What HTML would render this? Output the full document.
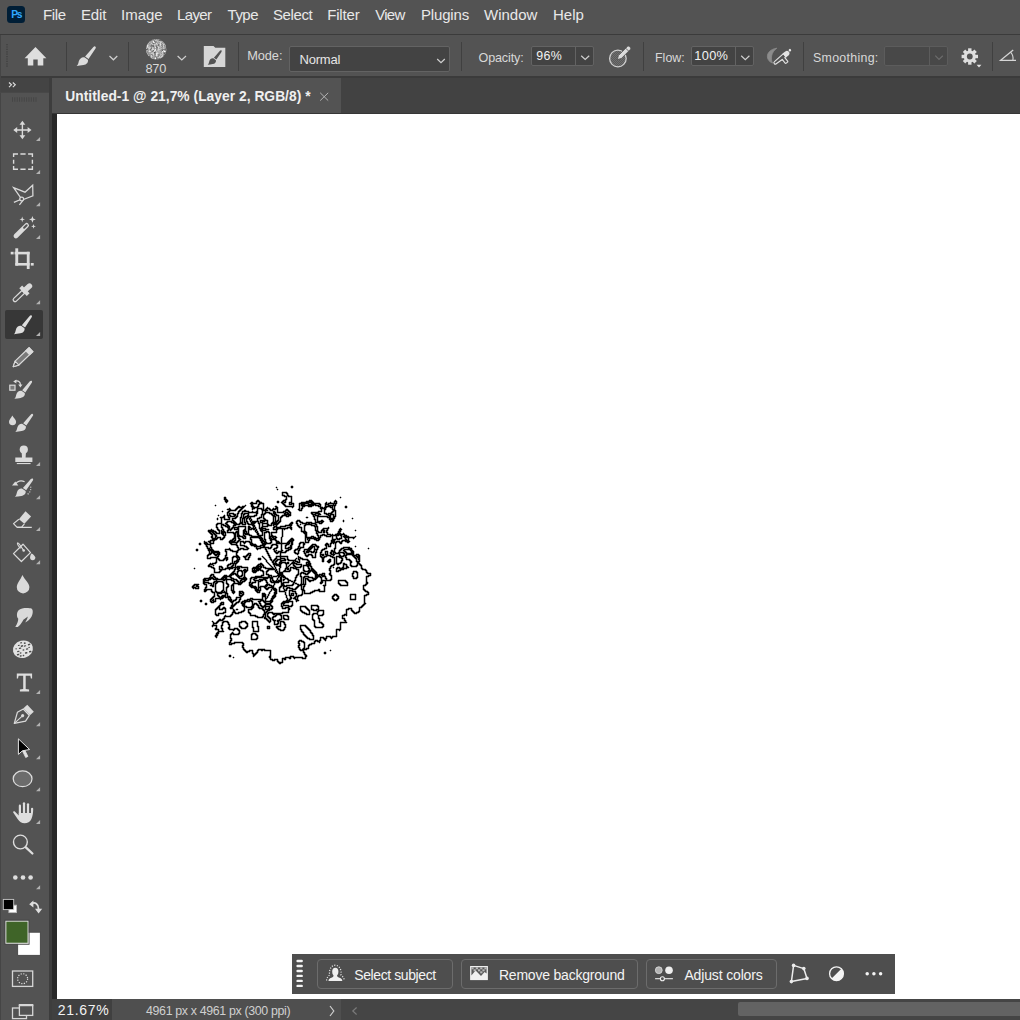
<!DOCTYPE html>
<html lang="en">
<head>
<meta charset="utf-8">
<title>Untitled-1 @ 21,7% (Layer 2, RGB/8) *</title>
<style>
html,body{margin:0;padding:0;}
body{width:1020px;height:1020px;overflow:hidden;background:#535353;position:relative;
 font-family:"Liberation Sans",sans-serif;color:#dedede;}
.abs{position:absolute;}
.t{position:absolute;white-space:nowrap;line-height:1;}
#menubar{left:0;top:0;width:1020px;height:34px;background:#535353;}
#menubar .t{font-size:15px;top:7px;color:#e8e8e8;}
#line1{left:0;top:34px;width:1020px;height:1px;background:#3b3b3b;}
#optbar{left:0;top:35px;width:1020px;height:41px;background:#535353;}
#line2{left:0;top:76px;width:1020px;height:2px;background:#3b3b3b;}
#tabrow{left:52px;top:78px;width:968px;height:36px;background:#424242;}
#tab{left:52px;top:78px;width:289px;height:36px;background:#535353;}
#tab .t{font-size:13px;font-weight:bold;color:#f0f0f0;letter-spacing:0.4px;}
#tools{left:0;top:78px;width:49px;height:942px;background:#535353;}
#toolgap{left:49px;top:78px;width:3px;height:942px;background:#3d3d3d;}
#toolhead{left:0;top:78px;width:49px;height:14px;background:#444444;}
#toolsel{left:5px;top:310px;width:38px;height:29px;background:#373737;border-radius:2px;}
#paste{left:52px;top:114px;width:5px;height:885px;background:#282828;}
#canvas{left:57px;top:114px;width:963px;height:885px;background:#ffffff;}
#status{left:52px;top:999px;width:968px;height:21px;background:#4f4f4f;}
#zoomfld{left:52px;top:999px;width:60px;height:21px;background:#404040;}
#hscroll{left:341px;top:999px;width:679px;height:21px;background:#454545;}
#hthumb{left:738px;top:1002px;width:290px;height:14px;background:#636363;border-radius:2px;}
.sep{position:absolute;width:1px;background:#404040;top:42px;height:29px;}
.ol{font-size:12.5px;color:#d8d8d8;top:51px;}
.field{position:absolute;background:#434343;border:1px solid #636363;box-sizing:border-box;border-radius:2px;}
.fdiv{position:absolute;width:1px;background:#636363;}
#ctb{left:292px;top:954px;width:603px;height:39.5px;background:#4e4e4e;}
.cbtn{position:absolute;top:5px;height:30px;border:1px solid #6c6c6c;border-radius:4px;box-sizing:border-box;}
.cbtn .t{font-size:14.5px;top:7px;color:#f2f2f2;}
#icons{left:0;top:0;}
</style>
</head>
<body>
<div id="menubar" class="abs"></div>
<div class="abs" style="left:7.2px;top:5.9px;width:17.7px;height:17px;background:#001e36;border-radius:3.5px;"></div>
<div id="line1" class="abs"></div>
<div id="optbar" class="abs"></div>
<div class="sep" style="left:66px"></div>
<div class="sep" style="left:128px"></div>
<div class="sep" style="left:238px"></div>
<div class="sep" style="left:461px"></div>
<div class="sep" style="left:643px"></div>
<div class="sep" style="left:803px"></div>
<div class="sep" style="left:992px"></div>
<div class="field" style="left:289px;top:46px;width:161px;height:26px"></div>
<div class="field" style="left:531px;top:46px;width:63px;height:20px"><div class="fdiv" style="left:43px;top:0;height:18px"></div></div>
<div class="field" style="left:691px;top:46px;width:63px;height:20px"><div class="fdiv" style="left:43px;top:0;height:18px"></div></div>
<div class="field" style="left:884px;top:46px;width:64px;height:20px;background:#484848;border-color:#5c5c5c"><div class="fdiv" style="left:44px;top:0;height:18px;background:#5c5c5c"></div></div>
<div id="line2" class="abs"></div>
<div id="tabrow" class="abs"></div>
<div id="tab" class="abs"></div>
<div class="abs" style="left:52px;top:113px;width:968px;height:1px;background:#363636"></div>
<div id="tools" class="abs"></div>
<div id="toolhead" class="abs"></div>
<div id="toolgap" class="abs"></div>
<div id="toolsel" class="abs"></div>
<div class="abs" style="left:0;top:35px;width:1px;height:985px;background:#454545"></div>
<div class="abs" style="left:0;top:92px;width:49px;height:1px;background:#484848"></div>
<div id="paste" class="abs"></div>
<div id="canvas" class="abs"></div>
<div id="status" class="abs"></div>
<div id="zoomfld" class="abs"></div>
<div id="hscroll" class="abs"></div>
<div id="hthumb" class="abs"></div>
<div id="ctb" class="abs">
 <div class="cbtn" style="left:25px;width:136px"></div>
 <div class="cbtn" style="left:169px;width:177px"></div>
 <div class="cbtn" style="left:354px;width:130.5px"></div>
</div>
<svg class="abs" style="left:0;top:0" width="1020" height="1020" viewBox="0 0 1020 1020"><path fill="#000" stroke="#000" stroke-width="0.5" d="M291 486h2v1h-2zM276 487h1v1h-1zM291 487h2v1h-2zM277 489h1v1h-1zM282 492h5v1h-5zM282 493h1v1h-1zM286 493h2v1h-2zM282 494h1v1h-1zM287 494h1v1h-1zM282 495h3v1h-3zM287 495h2v1h-2zM284 496h3v1h-3zM288 496h4v1h-4zM224 497h2v1h-2zM286 497h1v1h-1zM291 497h1v1h-1zM340 497h1v1h-1zM224 498h2v1h-2zM286 498h1v1h-1zM291 498h1v1h-1zM224 499h3v1h-3zM285 499h2v1h-2zM291 499h1v1h-1zM225 500h3v1h-3zM257 500h2v1h-2zM283 500h3v1h-3zM291 500h1v1h-1zM309 500h3v1h-3zM335 500h1v1h-1zM225 501h3v1h-3zM256 501h4v1h-4zM277 501h2v1h-2zM282 501h2v1h-2zM285 501h1v1h-1zM291 501h1v1h-1zM306 501h7v1h-7zM334 501h3v1h-3zM226 502h1v1h-1zM251 502h2v1h-2zM256 502h1v1h-1zM259 502h3v1h-3zM277 502h2v1h-2zM281 502h2v1h-2zM284 502h2v1h-2zM289 502h3v1h-3zM301 502h13v1h-13zM326 502h1v1h-1zM330 502h1v1h-1zM334 502h1v1h-1zM336 502h1v1h-1zM250 503h7v1h-7zM259 503h5v1h-5zM282 503h2v1h-2zM289 503h1v1h-1zM291 503h3v1h-3zM299 503h10v1h-10zM311 503h9v1h-9zM325 503h2v1h-2zM328 503h9v1h-9zM251 504h2v1h-2zM258 504h2v1h-2zM263 504h1v1h-1zM283 504h2v1h-2zM289 504h3v1h-3zM293 504h1v1h-1zM299 504h1v1h-1zM301 504h4v1h-4zM308 504h8v1h-8zM319 504h2v1h-2zM325 504h4v1h-4zM333 504h1v1h-1zM335 504h1v1h-1zM215 505h1v1h-1zM245 505h1v1h-1zM251 505h2v1h-2zM258 505h1v1h-1zM263 505h1v1h-1zM284 505h2v1h-2zM293 505h1v1h-1zM299 505h1v1h-1zM301 505h13v1h-13zM315 505h4v1h-4zM320 505h1v1h-1zM325 505h1v1h-1zM328 505h8v1h-8zM238 506h2v1h-2zM242 506h3v1h-3zM251 506h3v1h-3zM257 506h2v1h-2zM263 506h1v1h-1zM275 506h2v1h-2zM285 506h9v1h-9zM299 506h1v1h-1zM302 506h3v1h-3zM308 506h4v1h-4zM318 506h3v1h-3zM325 506h6v1h-6zM332 506h1v1h-1zM334 506h1v1h-1zM345 506h2v1h-2zM237 507h7v1h-7zM252 507h6v1h-6zM263 507h1v1h-1zM267 507h1v1h-1zM276 507h2v1h-2zM292 507h1v1h-1zM299 507h1v1h-1zM302 507h1v1h-1zM320 507h3v1h-3zM324 507h3v1h-3zM330 507h3v1h-3zM334 507h1v1h-1zM345 507h2v1h-2zM229 508h1v1h-1zM236 508h2v1h-2zM241 508h2v1h-2zM252 508h3v1h-3zM257 508h5v1h-5zM263 508h1v1h-1zM266 508h4v1h-4zM273 508h1v1h-1zM275 508h3v1h-3zM299 508h1v1h-1zM301 508h2v1h-2zM320 508h6v1h-6zM332 508h1v1h-1zM334 508h1v1h-1zM227 509h4v1h-4zM235 509h2v1h-2zM240 509h2v1h-2zM252 509h1v1h-1zM257 509h1v1h-1zM261 509h3v1h-3zM265 509h2v1h-2zM269 509h2v1h-2zM272 509h4v1h-4zM277 509h1v1h-1zM286 509h2v1h-2zM298 509h2v1h-2zM301 509h1v1h-1zM321 509h1v1h-1zM324 509h2v1h-2zM332 509h3v1h-3zM229 510h7v1h-7zM239 510h2v1h-2zM244 510h2v1h-2zM257 510h1v1h-1zM262 510h6v1h-6zM270 510h3v1h-3zM277 510h1v1h-1zM285 510h4v1h-4zM299 510h3v1h-3zM321 510h1v1h-1zM324 510h1v1h-1zM333 510h3v1h-3zM222 511h1v1h-1zM228 511h2v1h-2zM238 511h2v1h-2zM242 511h7v1h-7zM252 511h1v1h-1zM256 511h2v1h-2zM262 511h1v1h-1zM265 511h1v1h-1zM273 511h2v1h-2zM277 511h1v1h-1zM283 511h3v1h-3zM288 511h2v1h-2zM318 511h4v1h-4zM324 511h1v1h-1zM332 511h2v1h-2zM335 511h1v1h-1zM227 512h2v1h-2zM238 512h1v1h-1zM242 512h1v1h-1zM248 512h10v1h-10zM262 512h1v1h-1zM265 512h5v1h-5zM273 512h3v1h-3zM277 512h7v1h-7zM285 512h3v1h-3zM289 512h2v1h-2zM311 512h8v1h-8zM324 512h1v1h-1zM331 512h2v1h-2zM335 512h1v1h-1zM227 513h1v1h-1zM229 513h5v1h-5zM237 513h2v1h-2zM241 513h2v1h-2zM244 513h5v1h-5zM256 513h2v1h-2zM262 513h1v1h-1zM264 513h2v1h-2zM269 513h3v1h-3zM273 513h3v1h-3zM284 513h2v1h-2zM287 513h2v1h-2zM290 513h1v1h-1zM311 513h2v1h-2zM315 513h5v1h-5zM324 513h3v1h-3zM328 513h4v1h-4zM335 513h1v1h-1zM227 514h1v1h-1zM229 514h1v1h-1zM233 514h3v1h-3zM237 514h1v1h-1zM241 514h1v1h-1zM243 514h2v1h-2zM248 514h1v1h-1zM256 514h1v1h-1zM261 514h4v1h-4zM271 514h2v1h-2zM274 514h3v1h-3zM284 514h7v1h-7zM312 514h4v1h-4zM318 514h3v1h-3zM326 514h3v1h-3zM330 514h4v1h-4zM335 514h1v1h-1zM218 515h1v1h-1zM224 515h1v1h-1zM227 515h4v1h-4zM234 515h2v1h-2zM237 515h1v1h-1zM241 515h1v1h-1zM243 515h1v1h-1zM247 515h2v1h-2zM254 515h3v1h-3zM261 515h1v1h-1zM263 515h1v1h-1zM272 515h3v1h-3zM276 515h3v1h-3zM282 515h5v1h-5zM288 515h3v1h-3zM313 515h1v1h-1zM315 515h4v1h-4zM328 515h3v1h-3zM333 515h1v1h-1zM335 515h1v1h-1zM223 516h2v1h-2zM228 516h1v1h-1zM230 516h5v1h-5zM236 516h2v1h-2zM241 516h1v1h-1zM243 516h1v1h-1zM245 516h10v1h-10zM261 516h1v1h-1zM263 516h1v1h-1zM273 516h3v1h-3zM278 516h1v1h-1zM281 516h2v1h-2zM286 516h3v1h-3zM313 516h2v1h-2zM317 516h11v1h-11zM329 516h2v1h-2zM333 516h3v1h-3zM220 517h5v1h-5zM228 517h2v1h-2zM235 517h2v1h-2zM240 517h2v1h-2zM243 517h3v1h-3zM247 517h2v1h-2zM250 517h1v1h-1zM259 517h3v1h-3zM263 517h1v1h-1zM273 517h1v1h-1zM275 517h1v1h-1zM278 517h1v1h-1zM280 517h2v1h-2zM306 517h2v1h-2zM314 517h1v1h-1zM317 517h1v1h-1zM327 517h4v1h-4zM333 517h2v1h-2zM217 518h1v1h-1zM221 518h1v1h-1zM224 518h1v1h-1zM229 518h1v1h-1zM232 518h4v1h-4zM240 518h1v1h-1zM242 518h3v1h-3zM246 518h2v1h-2zM249 518h2v1h-2zM257 518h3v1h-3zM263 518h2v1h-2zM273 518h1v1h-1zM275 518h1v1h-1zM278 518h1v1h-1zM280 518h1v1h-1zM314 518h1v1h-1zM317 518h1v1h-1zM329 518h6v1h-6zM352 518h1v1h-1zM217 519h1v1h-1zM221 519h1v1h-1zM224 519h6v1h-6zM232 519h1v1h-1zM240 519h1v1h-1zM242 519h1v1h-1zM244 519h1v1h-1zM246 519h1v1h-1zM249 519h1v1h-1zM251 519h1v1h-1zM257 519h1v1h-1zM264 519h2v1h-2zM273 519h1v1h-1zM275 519h1v1h-1zM278 519h1v1h-1zM280 519h1v1h-1zM314 519h2v1h-2zM317 519h1v1h-1zM329 519h5v1h-5zM221 520h1v1h-1zM232 520h2v1h-2zM240 520h1v1h-1zM242 520h1v1h-1zM244 520h1v1h-1zM246 520h1v1h-1zM250 520h2v1h-2zM257 520h1v1h-1zM260 520h8v1h-8zM273 520h1v1h-1zM275 520h1v1h-1zM277 520h2v1h-2zM280 520h1v1h-1zM297 520h3v1h-3zM315 520h1v1h-1zM317 520h1v1h-1zM321 520h2v1h-2zM330 520h1v1h-1zM332 520h2v1h-2zM343 520h1v1h-1zM221 521h1v1h-1zM227 521h5v1h-5zM233 521h2v1h-2zM240 521h1v1h-1zM242 521h1v1h-1zM244 521h1v1h-1zM246 521h2v1h-2zM250 521h1v1h-1zM252 521h7v1h-7zM260 521h1v1h-1zM262 521h3v1h-3zM267 521h1v1h-1zM273 521h1v1h-1zM275 521h3v1h-3zM279 521h2v1h-2zM296 521h2v1h-2zM299 521h2v1h-2zM315 521h1v1h-1zM317 521h7v1h-7zM330 521h3v1h-3zM343 521h1v1h-1zM221 522h1v1h-1zM226 522h2v1h-2zM231 522h5v1h-5zM240 522h3v1h-3zM244 522h2v1h-2zM247 522h1v1h-1zM251 522h5v1h-5zM258 522h1v1h-1zM260 522h3v1h-3zM267 522h1v1h-1zM272 522h5v1h-5zM278 522h2v1h-2zM291 522h2v1h-2zM296 522h1v1h-1zM300 522h3v1h-3zM306 522h6v1h-6zM315 522h5v1h-5zM321 522h2v1h-2zM217 523h5v1h-5zM225 523h2v1h-2zM233 523h4v1h-4zM239 523h4v1h-4zM245 523h1v1h-1zM247 523h2v1h-2zM251 523h4v1h-4zM258 523h2v1h-2zM262 523h6v1h-6zM271 523h8v1h-8zM290 523h3v1h-3zM296 523h2v1h-2zM302 523h5v1h-5zM308 523h2v1h-2zM311 523h5v1h-5zM319 523h3v1h-3zM216 524h2v1h-2zM221 524h3v1h-3zM226 524h2v1h-2zM234 524h6v1h-6zM242 524h4v1h-4zM248 524h6v1h-6zM259 524h1v1h-1zM262 524h1v1h-1zM267 524h2v1h-2zM271 524h1v1h-1zM273 524h5v1h-5zM289 524h3v1h-3zM297 524h1v1h-1zM300 524h1v1h-1zM305 524h7v1h-7zM315 524h2v1h-2zM216 525h1v1h-1zM221 525h1v1h-1zM223 525h3v1h-3zM227 525h2v1h-2zM233 525h3v1h-3zM252 525h3v1h-3zM259 525h1v1h-1zM262 525h1v1h-1zM267 525h5v1h-5zM273 525h1v1h-1zM276 525h1v1h-1zM285 525h7v1h-7zM297 525h2v1h-2zM304 525h2v1h-2zM311 525h4v1h-4zM316 525h1v1h-1zM216 526h1v1h-1zM221 526h1v1h-1zM225 526h5v1h-5zM233 526h1v1h-1zM238 526h8v1h-8zM248 526h2v1h-2zM253 526h2v1h-2zM259 526h1v1h-1zM262 526h6v1h-6zM274 526h3v1h-3zM280 526h6v1h-6zM290 526h1v1h-1zM298 526h2v1h-2zM304 526h1v1h-1zM314 526h4v1h-4zM216 527h2v1h-2zM221 527h2v1h-2zM227 527h3v1h-3zM232 527h7v1h-7zM245 527h1v1h-1zM248 527h3v1h-3zM253 527h1v1h-1zM255 527h1v1h-1zM259 527h1v1h-1zM261 527h2v1h-2zM273 527h2v1h-2zM276 527h5v1h-5zM287 527h5v1h-5zM299 527h3v1h-3zM304 527h1v1h-1zM315 527h1v1h-1zM317 527h1v1h-1zM328 527h1v1h-1zM217 528h1v1h-1zM222 528h1v1h-1zM228 528h2v1h-2zM231 528h2v1h-2zM234 528h1v1h-1zM237 528h2v1h-2zM245 528h1v1h-1zM248 528h2v1h-2zM251 528h5v1h-5zM259 528h7v1h-7zM273 528h1v1h-1zM276 528h12v1h-12zM290 528h2v1h-2zM301 528h1v1h-1zM304 528h1v1h-1zM315 528h1v1h-1zM317 528h1v1h-1zM323 528h6v1h-6zM340 528h1v1h-1zM211 529h1v1h-1zM217 529h2v1h-2zM222 529h2v1h-2zM228 529h4v1h-4zM234 529h5v1h-5zM244 529h2v1h-2zM248 529h4v1h-4zM253 529h2v1h-2zM256 529h1v1h-1zM260 529h3v1h-3zM265 529h4v1h-4zM273 529h5v1h-5zM282 529h1v1h-1zM284 529h1v1h-1zM291 529h1v1h-1zM301 529h1v1h-1zM304 529h1v1h-1zM315 529h1v1h-1zM317 529h1v1h-1zM322 529h2v1h-2zM327 529h1v1h-1zM339 529h3v1h-3zM208 530h6v1h-6zM218 530h2v1h-2zM221 530h1v1h-1zM223 530h1v1h-1zM227 530h2v1h-2zM230 530h1v1h-1zM238 530h1v1h-1zM243 530h3v1h-3zM248 530h1v1h-1zM255 530h2v1h-2zM260 530h6v1h-6zM276 530h1v1h-1zM282 530h1v1h-1zM301 530h1v1h-1zM304 530h1v1h-1zM315 530h3v1h-3zM321 530h4v1h-4zM326 530h2v1h-2zM339 530h2v1h-2zM355 530h1v1h-1zM208 531h8v1h-8zM219 531h1v1h-1zM221 531h4v1h-4zM227 531h1v1h-1zM236 531h3v1h-3zM243 531h4v1h-4zM248 531h1v1h-1zM255 531h1v1h-1zM257 531h1v1h-1zM261 531h2v1h-2zM266 531h3v1h-3zM276 531h1v1h-1zM282 531h1v1h-1zM301 531h5v1h-5zM316 531h3v1h-3zM321 531h1v1h-1zM323 531h2v1h-2zM326 531h1v1h-1zM338 531h3v1h-3zM209 532h2v1h-2zM212 532h2v1h-2zM215 532h2v1h-2zM219 532h1v1h-1zM221 532h5v1h-5zM227 532h7v1h-7zM235 532h4v1h-4zM243 532h2v1h-2zM246 532h1v1h-1zM248 532h1v1h-1zM256 532h2v1h-2zM262 532h1v1h-1zM264 532h3v1h-3zM268 532h2v1h-2zM271 532h6v1h-6zM282 532h1v1h-1zM303 532h4v1h-4zM316 532h1v1h-1zM318 532h4v1h-4zM323 532h2v1h-2zM326 532h2v1h-2zM338 532h2v1h-2zM210 533h2v1h-2zM213 533h2v1h-2zM216 533h4v1h-4zM221 533h3v1h-3zM225 533h1v1h-1zM233 533h3v1h-3zM237 533h2v1h-2zM243 533h6v1h-6zM257 533h2v1h-2zM262 533h1v1h-1zM264 533h1v1h-1zM269 533h1v1h-1zM271 533h1v1h-1zM282 533h1v1h-1zM304 533h3v1h-3zM316 533h2v1h-2zM327 533h1v1h-1zM337 533h4v1h-4zM343 533h1v1h-1zM211 534h2v1h-2zM214 534h2v1h-2zM222 534h2v1h-2zM225 534h1v1h-1zM234 534h2v1h-2zM237 534h2v1h-2zM243 534h1v1h-1zM245 534h5v1h-5zM257 534h2v1h-2zM262 534h1v1h-1zM264 534h1v1h-1zM269 534h1v1h-1zM271 534h1v1h-1zM282 534h1v1h-1zM305 534h2v1h-2zM317 534h1v1h-1zM322 534h3v1h-3zM327 534h4v1h-4zM332 534h1v1h-1zM335 534h10v1h-10zM212 535h1v1h-1zM215 535h2v1h-2zM223 535h3v1h-3zM234 535h2v1h-2zM237 535h3v1h-3zM243 535h2v1h-2zM249 535h3v1h-3zM258 535h5v1h-5zM264 535h1v1h-1zM269 535h1v1h-1zM271 535h2v1h-2zM282 535h1v1h-1zM305 535h2v1h-2zM317 535h2v1h-2zM320 535h3v1h-3zM324 535h3v1h-3zM330 535h9v1h-9zM340 535h2v1h-2zM344 535h3v1h-3zM211 536h2v1h-2zM215 536h2v1h-2zM224 536h1v1h-1zM234 536h2v1h-2zM237 536h6v1h-6zM244 536h2v1h-2zM251 536h10v1h-10zM264 536h1v1h-1zM269 536h7v1h-7zM282 536h1v1h-1zM305 536h2v1h-2zM311 536h3v1h-3zM318 536h1v1h-1zM320 536h1v1h-1zM326 536h5v1h-5zM332 536h1v1h-1zM336 536h1v1h-1zM341 536h1v1h-1zM343 536h6v1h-6zM355 536h1v1h-1zM211 537h2v1h-2zM215 537h1v1h-1zM217 537h4v1h-4zM223 537h2v1h-2zM234 537h2v1h-2zM238 537h1v1h-1zM242 537h2v1h-2zM245 537h1v1h-1zM250 537h12v1h-12zM264 537h1v1h-1zM269 537h2v1h-2zM272 537h2v1h-2zM275 537h2v1h-2zM281 537h1v1h-1zM305 537h7v1h-7zM313 537h3v1h-3zM318 537h3v1h-3zM332 537h1v1h-1zM336 537h1v1h-1zM341 537h1v1h-1zM344 537h11v1h-11zM212 538h6v1h-6zM220 538h1v1h-1zM222 538h2v1h-2zM233 538h3v1h-3zM238 538h2v1h-2zM243 538h3v1h-3zM250 538h1v1h-1zM259 538h4v1h-4zM264 538h1v1h-1zM269 538h3v1h-3zM273 538h3v1h-3zM281 538h1v1h-1zM291 538h2v1h-2zM305 538h1v1h-1zM307 538h13v1h-13zM332 538h1v1h-1zM336 538h2v1h-2zM339 538h3v1h-3zM345 538h1v1h-1zM348 538h1v1h-1zM353 538h1v1h-1zM212 539h5v1h-5zM220 539h3v1h-3zM232 539h2v1h-2zM235 539h1v1h-1zM239 539h2v1h-2zM250 539h2v1h-2zM260 539h3v1h-3zM264 539h2v1h-2zM270 539h6v1h-6zM281 539h1v1h-1zM290 539h4v1h-4zM305 539h1v1h-1zM307 539h1v1h-1zM309 539h1v1h-1zM314 539h3v1h-3zM318 539h2v1h-2zM332 539h4v1h-4zM337 539h3v1h-3zM345 539h2v1h-2zM348 539h1v1h-1zM210 540h5v1h-5zM230 540h3v1h-3zM234 540h2v1h-2zM238 540h2v1h-2zM251 540h1v1h-1zM260 540h4v1h-4zM265 540h1v1h-1zM270 540h2v1h-2zM275 540h2v1h-2zM281 540h1v1h-1zM289 540h5v1h-5zM305 540h1v1h-1zM308 540h2v1h-2zM316 540h3v1h-3zM331 540h4v1h-4zM342 540h7v1h-7zM204 541h1v1h-1zM208 541h3v1h-3zM213 541h1v1h-1zM229 541h6v1h-6zM237 541h2v1h-2zM240 541h4v1h-4zM245 541h5v1h-5zM251 541h1v1h-1zM261 541h5v1h-5zM271 541h1v1h-1zM276 541h3v1h-3zM281 541h1v1h-1zM288 541h5v1h-5zM305 541h1v1h-1zM308 541h1v1h-1zM331 541h4v1h-4zM336 541h4v1h-4zM341 541h2v1h-2zM345 541h5v1h-5zM204 542h3v1h-3zM209 542h2v1h-2zM213 542h1v1h-1zM229 542h9v1h-9zM240 542h1v1h-1zM243 542h3v1h-3zM249 542h3v1h-3zM261 542h2v1h-2zM264 542h3v1h-3zM270 542h2v1h-2zM276 542h4v1h-4zM281 542h1v1h-1zM287 542h3v1h-3zM291 542h2v1h-2zM300 542h4v1h-4zM305 542h4v1h-4zM331 542h6v1h-6zM339 542h3v1h-3zM347 542h2v1h-2zM199 543h2v1h-2zM204 543h4v1h-4zM210 543h4v1h-4zM230 543h2v1h-2zM236 543h1v1h-1zM240 543h1v1h-1zM244 543h1v1h-1zM250 543h3v1h-3zM262 543h9v1h-9zM276 543h14v1h-14zM291 543h2v1h-2zM299 543h2v1h-2zM303 543h2v1h-2zM326 543h2v1h-2zM330 543h2v1h-2zM333 543h1v1h-1zM335 543h1v1h-1zM340 543h2v1h-2zM199 544h2v1h-2zM205 544h6v1h-6zM231 544h6v1h-6zM240 544h1v1h-1zM250 544h6v1h-6zM262 544h4v1h-4zM272 544h5v1h-5zM281 544h1v1h-1zM286 544h3v1h-3zM291 544h2v1h-2zM299 544h1v1h-1zM303 544h2v1h-2zM312 544h4v1h-4zM325 544h4v1h-4zM330 544h1v1h-1zM335 544h1v1h-1zM206 545h1v1h-1zM210 545h1v1h-1zM236 545h2v1h-2zM240 545h5v1h-5zM251 545h6v1h-6zM260 545h5v1h-5zM271 545h2v1h-2zM276 545h2v1h-2zM281 545h1v1h-1zM285 545h2v1h-2zM290 545h2v1h-2zM299 545h1v1h-1zM303 545h1v1h-1zM311 545h2v1h-2zM315 545h2v1h-2zM325 545h2v1h-2zM328 545h1v1h-1zM330 545h1v1h-1zM335 545h1v1h-1zM206 546h2v1h-2zM210 546h1v1h-1zM237 546h1v1h-1zM244 546h3v1h-3zM254 546h7v1h-7zM263 546h2v1h-2zM271 546h1v1h-1zM277 546h1v1h-1zM281 546h1v1h-1zM285 546h1v1h-1zM290 546h2v1h-2zM298 546h2v1h-2zM303 546h1v1h-1zM310 546h5v1h-5zM316 546h3v1h-3zM326 546h1v1h-1zM328 546h3v1h-3zM335 546h1v1h-1zM355 546h1v1h-1zM207 547h1v1h-1zM210 547h2v1h-2zM237 547h2v1h-2zM246 547h2v1h-2zM256 547h1v1h-1zM260 547h9v1h-9zM270 547h2v1h-2zM276 547h2v1h-2zM281 547h1v1h-1zM285 547h1v1h-1zM288 547h4v1h-4zM298 547h1v1h-1zM300 547h4v1h-4zM309 547h4v1h-4zM314 547h1v1h-1zM317 547h2v1h-2zM326 547h1v1h-1zM335 547h1v1h-1zM343 547h7v1h-7zM207 548h3v1h-3zM211 548h1v1h-1zM229 548h1v1h-1zM238 548h1v1h-1zM240 548h4v1h-4zM247 548h2v1h-2zM256 548h5v1h-5zM265 548h1v1h-1zM268 548h3v1h-3zM274 548h3v1h-3zM281 548h1v1h-1zM285 548h4v1h-4zM290 548h2v1h-2zM297 548h4v1h-4zM308 548h4v1h-4zM314 548h1v1h-1zM317 548h1v1h-1zM324 548h3v1h-3zM334 548h2v1h-2zM341 548h3v1h-3zM348 548h4v1h-4zM368 548h1v1h-1zM196 549h2v1h-2zM208 549h5v1h-5zM225 549h6v1h-6zM238 549h3v1h-3zM243 549h5v1h-5zM257 549h1v1h-1zM265 549h2v1h-2zM273 549h2v1h-2zM281 549h1v1h-1zM288 549h3v1h-3zM295 549h3v1h-3zM299 549h1v1h-1zM304 549h7v1h-7zM314 549h4v1h-4zM322 549h3v1h-3zM334 549h1v1h-1zM340 549h2v1h-2zM344 549h8v1h-8zM196 550h2v1h-2zM208 550h6v1h-6zM225 550h1v1h-1zM230 550h3v1h-3zM237 550h2v1h-2zM266 550h1v1h-1zM274 550h1v1h-1zM276 550h1v1h-1zM281 550h2v1h-2zM286 550h3v1h-3zM294 550h2v1h-2zM298 550h2v1h-2zM304 550h1v1h-1zM307 550h3v1h-3zM314 550h1v1h-1zM316 550h1v1h-1zM321 550h2v1h-2zM331 550h2v1h-2zM334 550h1v1h-1zM339 550h2v1h-2zM343 550h2v1h-2zM350 550h3v1h-3zM209 551h1v1h-1zM211 551h8v1h-8zM225 551h2v1h-2zM232 551h6v1h-6zM266 551h2v1h-2zM274 551h2v1h-2zM278 551h4v1h-4zM285 551h2v1h-2zM294 551h1v1h-1zM298 551h1v1h-1zM303 551h2v1h-2zM306 551h6v1h-6zM313 551h2v1h-2zM316 551h1v1h-1zM321 551h1v1h-1zM325 551h3v1h-3zM331 551h4v1h-4zM339 551h1v1h-1zM344 551h2v1h-2zM351 551h3v1h-3zM209 552h1v1h-1zM211 552h9v1h-9zM226 552h1v1h-1zM236 552h2v1h-2zM267 552h1v1h-1zM275 552h4v1h-4zM280 552h6v1h-6zM294 552h2v1h-2zM298 552h1v1h-1zM304 552h1v1h-1zM306 552h3v1h-3zM311 552h3v1h-3zM315 552h2v1h-2zM320 552h2v1h-2zM325 552h1v1h-1zM327 552h1v1h-1zM330 552h2v1h-2zM333 552h3v1h-3zM338 552h6v1h-6zM345 552h2v1h-2zM351 552h3v1h-3zM209 553h3v1h-3zM213 553h2v1h-2zM217 553h3v1h-3zM226 553h1v1h-1zM236 553h1v1h-1zM248 553h3v1h-3zM267 553h2v1h-2zM276 553h2v1h-2zM280 553h1v1h-1zM295 553h4v1h-4zM304 553h2v1h-2zM315 553h1v1h-1zM320 553h1v1h-1zM325 553h1v1h-1zM327 553h1v1h-1zM330 553h2v1h-2zM333 553h1v1h-1zM335 553h5v1h-5zM343 553h2v1h-2zM346 553h8v1h-8zM208 554h3v1h-3zM214 554h6v1h-6zM226 554h1v1h-1zM236 554h1v1h-1zM247 554h2v1h-2zM250 554h1v1h-1zM268 554h1v1h-1zM280 554h1v1h-1zM297 554h1v1h-1zM305 554h1v1h-1zM308 554h4v1h-4zM315 554h1v1h-1zM320 554h4v1h-4zM325 554h3v1h-3zM331 554h4v1h-4zM339 554h1v1h-1zM344 554h1v1h-1zM346 554h8v1h-8zM356 554h3v1h-3zM207 555h2v1h-2zM215 555h2v1h-2zM218 555h1v1h-1zM225 555h2v1h-2zM236 555h2v1h-2zM246 555h2v1h-2zM249 555h2v1h-2zM268 555h2v1h-2zM280 555h1v1h-1zM305 555h4v1h-4zM311 555h2v1h-2zM315 555h1v1h-1zM320 555h1v1h-1zM322 555h2v1h-2zM326 555h5v1h-5zM333 555h1v1h-1zM339 555h2v1h-2zM343 555h4v1h-4zM352 555h5v1h-5zM358 555h2v1h-2zM207 556h1v1h-1zM217 556h2v1h-2zM225 556h1v1h-1zM233 556h6v1h-6zM243 556h4v1h-4zM249 556h1v1h-1zM262 556h1v1h-1zM269 556h1v1h-1zM276 556h12v1h-12zM298 556h1v1h-1zM306 556h2v1h-2zM312 556h1v1h-1zM315 556h1v1h-1zM320 556h2v1h-2zM324 556h3v1h-3zM330 556h3v1h-3zM336 556h8v1h-8zM345 556h1v1h-1zM353 556h2v1h-2zM356 556h4v1h-4zM207 557h1v1h-1zM210 557h8v1h-8zM225 557h3v1h-3zM232 557h2v1h-2zM236 557h4v1h-4zM244 557h2v1h-2zM248 557h2v1h-2zM263 557h1v1h-1zM269 557h2v1h-2zM276 557h1v1h-1zM280 557h1v1h-1zM287 557h1v1h-1zM298 557h3v1h-3zM312 557h4v1h-4zM321 557h4v1h-4zM332 557h3v1h-3zM336 557h1v1h-1zM339 557h3v1h-3zM345 557h2v1h-2zM354 557h2v1h-2zM357 557h3v1h-3zM207 558h4v1h-4zM216 558h3v1h-3zM224 558h4v1h-4zM232 558h1v1h-1zM237 558h1v1h-1zM239 558h1v1h-1zM245 558h1v1h-1zM248 558h1v1h-1zM258 558h3v1h-3zM264 558h1v1h-1zM270 558h1v1h-1zM275 558h2v1h-2zM280 558h5v1h-5zM287 558h1v1h-1zM296 558h1v1h-1zM298 558h1v1h-1zM300 558h3v1h-3zM322 558h2v1h-2zM334 558h1v1h-1zM336 558h1v1h-1zM341 558h2v1h-2zM346 558h1v1h-1zM355 558h2v1h-2zM358 558h2v1h-2zM216 559h1v1h-1zM218 559h2v1h-2zM223 559h2v1h-2zM226 559h2v1h-2zM232 559h1v1h-1zM237 559h3v1h-3zM245 559h4v1h-4zM258 559h3v1h-3zM265 559h1v1h-1zM270 559h2v1h-2zM274 559h2v1h-2zM277 559h4v1h-4zM284 559h2v1h-2zM287 559h2v1h-2zM295 559h1v1h-1zM298 559h2v1h-2zM302 559h6v1h-6zM322 559h2v1h-2zM329 559h2v1h-2zM334 559h1v1h-1zM336 559h1v1h-1zM342 559h1v1h-1zM346 559h4v1h-4zM356 559h1v1h-1zM358 559h2v1h-2zM216 560h1v1h-1zM219 560h5v1h-5zM226 560h1v1h-1zM232 560h1v1h-1zM236 560h3v1h-3zM266 560h1v1h-1zM271 560h1v1h-1zM273 560h2v1h-2zM276 560h2v1h-2zM280 560h6v1h-6zM288 560h8v1h-8zM299 560h1v1h-1zM307 560h2v1h-2zM322 560h2v1h-2zM328 560h3v1h-3zM334 560h1v1h-1zM336 560h1v1h-1zM341 560h2v1h-2zM349 560h2v1h-2zM356 560h1v1h-1zM359 560h1v1h-1zM216 561h1v1h-1zM232 561h1v1h-1zM234 561h5v1h-5zM266 561h1v1h-1zM272 561h2v1h-2zM275 561h2v1h-2zM280 561h2v1h-2zM293 561h1v1h-1zM295 561h3v1h-3zM299 561h1v1h-1zM308 561h2v1h-2zM322 561h2v1h-2zM327 561h4v1h-4zM334 561h1v1h-1zM336 561h1v1h-1zM341 561h1v1h-1zM350 561h2v1h-2zM356 561h4v1h-4zM215 562h2v1h-2zM232 562h1v1h-1zM234 562h1v1h-1zM236 562h2v1h-2zM267 562h1v1h-1zM272 562h2v1h-2zM275 562h1v1h-1zM279 562h7v1h-7zM287 562h2v1h-2zM292 562h3v1h-3zM297 562h3v1h-3zM306 562h4v1h-4zM328 562h2v1h-2zM334 562h1v1h-1zM336 562h1v1h-1zM340 562h2v1h-2zM350 562h2v1h-2zM357 562h2v1h-2zM210 563h1v1h-1zM212 563h4v1h-4zM230 563h7v1h-7zM260 563h2v1h-2zM268 563h1v1h-1zM273 563h4v1h-4zM279 563h3v1h-3zM285 563h4v1h-4zM291 563h6v1h-6zM306 563h1v1h-1zM308 563h3v1h-3zM334 563h1v1h-1zM336 563h5v1h-5zM343 563h2v1h-2zM350 563h1v1h-1zM357 563h3v1h-3zM209 564h4v1h-4zM228 564h3v1h-3zM233 564h1v1h-1zM235 564h1v1h-1zM258 564h5v1h-5zM269 564h1v1h-1zM273 564h8v1h-8zM286 564h1v1h-1zM290 564h1v1h-1zM293 564h1v1h-1zM296 564h6v1h-6zM306 564h5v1h-5zM333 564h2v1h-2zM337 564h2v1h-2zM343 564h4v1h-4zM350 564h1v1h-1zM357 564h1v1h-1zM359 564h2v1h-2zM208 565h2v1h-2zM213 565h1v1h-1zM227 565h2v1h-2zM232 565h2v1h-2zM235 565h1v1h-1zM257 565h2v1h-2zM260 565h1v1h-1zM262 565h2v1h-2zM270 565h1v1h-1zM274 565h1v1h-1zM276 565h5v1h-5zM286 565h1v1h-1zM289 565h1v1h-1zM293 565h2v1h-2zM301 565h1v1h-1zM303 565h8v1h-8zM331 565h3v1h-3zM343 565h1v1h-1zM346 565h1v1h-1zM350 565h2v1h-2zM356 565h2v1h-2zM360 565h2v1h-2zM208 566h4v1h-4zM219 566h3v1h-3zM227 566h1v1h-1zM231 566h2v1h-2zM235 566h1v1h-1zM237 566h5v1h-5zM256 566h6v1h-6zM263 566h1v1h-1zM271 566h1v1h-1zM274 566h1v1h-1zM279 566h2v1h-2zM286 566h1v1h-1zM288 566h1v1h-1zM294 566h2v1h-2zM300 566h2v1h-2zM303 566h1v1h-1zM307 566h2v1h-2zM310 566h2v1h-2zM330 566h2v1h-2zM343 566h1v1h-1zM346 566h2v1h-2zM351 566h6v1h-6zM361 566h1v1h-1zM211 567h3v1h-3zM219 567h1v1h-1zM221 567h2v1h-2zM227 567h13v1h-13zM241 567h7v1h-7zM253 567h6v1h-6zM260 567h2v1h-2zM263 567h3v1h-3zM272 567h1v1h-1zM275 567h1v1h-1zM280 567h1v1h-1zM286 567h2v1h-2zM290 567h4v1h-4zM295 567h6v1h-6zM303 567h1v1h-1zM308 567h1v1h-1zM311 567h1v1h-1zM330 567h1v1h-1zM333 567h1v1h-1zM337 567h3v1h-3zM342 567h2v1h-2zM346 567h3v1h-3zM361 567h1v1h-1zM194 568h1v1h-1zM213 568h2v1h-2zM219 568h1v1h-1zM222 568h1v1h-1zM225 568h8v1h-8zM235 568h1v1h-1zM237 568h3v1h-3zM247 568h1v1h-1zM252 568h9v1h-9zM265 568h9v1h-9zM275 568h1v1h-1zM279 568h1v1h-1zM285 568h4v1h-4zM290 568h1v1h-1zM293 568h4v1h-4zM303 568h1v1h-1zM308 568h2v1h-2zM311 568h2v1h-2zM329 568h2v1h-2zM336 568h2v1h-2zM339 568h8v1h-8zM361 568h2v1h-2zM214 569h1v1h-1zM219 569h7v1h-7zM229 569h1v1h-1zM234 569h2v1h-2zM237 569h2v1h-2zM244 569h2v1h-2zM247 569h1v1h-1zM252 569h1v1h-1zM254 569h1v1h-1zM256 569h5v1h-5zM268 569h7v1h-7zM276 569h1v1h-1zM279 569h1v1h-1zM285 569h1v1h-1zM287 569h2v1h-2zM290 569h1v1h-1zM296 569h3v1h-3zM303 569h1v1h-1zM309 569h1v1h-1zM311 569h3v1h-3zM329 569h1v1h-1zM336 569h1v1h-1zM340 569h4v1h-4zM362 569h4v1h-4zM214 570h1v1h-1zM220 570h2v1h-2zM234 570h1v1h-1zM238 570h4v1h-4zM243 570h5v1h-5zM252 570h7v1h-7zM260 570h3v1h-3zM267 570h2v1h-2zM275 570h2v1h-2zM279 570h1v1h-1zM284 570h2v1h-2zM289 570h2v1h-2zM298 570h1v1h-1zM303 570h2v1h-2zM308 570h7v1h-7zM329 570h2v1h-2zM336 570h1v1h-1zM338 570h3v1h-3zM365 570h2v1h-2zM214 571h1v1h-1zM219 571h2v1h-2zM233 571h2v1h-2zM237 571h2v1h-2zM241 571h2v1h-2zM244 571h3v1h-3zM252 571h5v1h-5zM262 571h2v1h-2zM266 571h2v1h-2zM275 571h1v1h-1zM277 571h1v1h-1zM279 571h1v1h-1zM283 571h7v1h-7zM298 571h1v1h-1zM304 571h7v1h-7zM312 571h4v1h-4zM330 571h1v1h-1zM336 571h3v1h-3zM353 571h4v1h-4zM366 571h1v1h-1zM214 572h6v1h-6zM232 572h2v1h-2zM237 572h1v1h-1zM242 572h1v1h-1zM244 572h2v1h-2zM253 572h3v1h-3zM263 572h1v1h-1zM266 572h1v1h-1zM276 572h2v1h-2zM279 572h4v1h-4zM298 572h1v1h-1zM301 572h3v1h-3zM308 572h2v1h-2zM313 572h4v1h-4zM330 572h1v1h-1zM353 572h1v1h-1zM356 572h2v1h-2zM366 572h2v1h-2zM231 573h5v1h-5zM237 573h1v1h-1zM242 573h1v1h-1zM244 573h1v1h-1zM263 573h1v1h-1zM266 573h1v1h-1zM277 573h6v1h-6zM298 573h1v1h-1zM300 573h2v1h-2zM303 573h3v1h-3zM307 573h2v1h-2zM314 573h3v1h-3zM322 573h3v1h-3zM329 573h2v1h-2zM352 573h2v1h-2zM357 573h1v1h-1zM367 573h4v1h-4zM211 574h3v1h-3zM230 574h4v1h-4zM235 574h3v1h-3zM242 574h1v1h-1zM244 574h1v1h-1zM263 574h1v1h-1zM266 574h3v1h-3zM278 574h5v1h-5zM297 574h2v1h-2zM300 574h1v1h-1zM305 574h3v1h-3zM315 574h3v1h-3zM319 574h4v1h-4zM324 574h1v1h-1zM329 574h2v1h-2zM352 574h1v1h-1zM357 574h1v1h-1zM370 574h1v1h-1zM210 575h2v1h-2zM213 575h1v1h-1zM224 575h3v1h-3zM229 575h3v1h-3zM236 575h3v1h-3zM241 575h2v1h-2zM244 575h1v1h-1zM261 575h3v1h-3zM268 575h4v1h-4zM277 575h7v1h-7zM296 575h2v1h-2zM300 575h1v1h-1zM315 575h5v1h-5zM321 575h4v1h-4zM330 575h2v1h-2zM352 575h1v1h-1zM357 575h1v1h-1zM368 575h3v1h-3zM210 576h1v1h-1zM213 576h2v1h-2zM223 576h8v1h-8zM237 576h5v1h-5zM244 576h1v1h-1zM255 576h7v1h-7zM268 576h2v1h-2zM271 576h1v1h-1zM273 576h4v1h-4zM278 576h2v1h-2zM281 576h4v1h-4zM296 576h1v1h-1zM300 576h2v1h-2zM304 576h5v1h-5zM315 576h6v1h-6zM322 576h4v1h-4zM331 576h1v1h-1zM352 576h2v1h-2zM357 576h1v1h-1zM366 576h3v1h-3zM209 577h4v1h-4zM214 577h2v1h-2zM222 577h5v1h-5zM230 577h2v1h-2zM238 577h2v1h-2zM243 577h3v1h-3zM251 577h22v1h-22zM278 577h1v1h-1zM280 577h2v1h-2zM283 577h3v1h-3zM295 577h2v1h-2zM301 577h1v1h-1zM303 577h2v1h-2zM308 577h5v1h-5zM315 577h3v1h-3zM320 577h2v1h-2zM325 577h1v1h-1zM331 577h1v1h-1zM353 577h1v1h-1zM356 577h2v1h-2zM366 577h1v1h-1zM204 578h10v1h-10zM215 578h3v1h-3zM221 578h3v1h-3zM225 578h2v1h-2zM231 578h3v1h-3zM239 578h8v1h-8zM250 578h2v1h-2zM254 578h3v1h-3zM263 578h5v1h-5zM270 578h3v1h-3zM277 578h1v1h-1zM280 578h2v1h-2zM285 578h3v1h-3zM295 578h1v1h-1zM301 578h1v1h-1zM303 578h1v1h-1zM305 578h3v1h-3zM312 578h5v1h-5zM321 578h1v1h-1zM325 578h2v1h-2zM331 578h1v1h-1zM353 578h4v1h-4zM366 578h1v1h-1zM203 579h3v1h-3zM208 579h3v1h-3zM213 579h19v1h-19zM233 579h4v1h-4zM241 579h6v1h-6zM250 579h1v1h-1zM253 579h2v1h-2zM259 579h7v1h-7zM270 579h1v1h-1zM272 579h1v1h-1zM277 579h1v1h-1zM280 579h2v1h-2zM283 579h2v1h-2zM287 579h2v1h-2zM295 579h1v1h-1zM301 579h1v1h-1zM303 579h1v1h-1zM305 579h1v1h-1zM307 579h2v1h-2zM313 579h3v1h-3zM321 579h1v1h-1zM326 579h1v1h-1zM330 579h2v1h-2zM366 579h1v1h-1zM203 580h6v1h-6zM216 580h1v1h-1zM223 580h2v1h-2zM226 580h1v1h-1zM231 580h3v1h-3zM236 580h2v1h-2zM240 580h2v1h-2zM244 580h2v1h-2zM250 580h1v1h-1zM254 580h5v1h-5zM260 580h3v1h-3zM265 580h2v1h-2zM270 580h1v1h-1zM272 580h2v1h-2zM276 580h1v1h-1zM278 580h4v1h-4zM283 580h1v1h-1zM288 580h3v1h-3zM294 580h2v1h-2zM301 580h1v1h-1zM303 580h1v1h-1zM305 580h1v1h-1zM308 580h6v1h-6zM321 580h10v1h-10zM338 580h8v1h-8zM366 580h1v1h-1zM203 581h2v1h-2zM214 581h9v1h-9zM226 581h1v1h-1zM233 581h2v1h-2zM237 581h2v1h-2zM240 581h1v1h-1zM242 581h3v1h-3zM250 581h1v1h-1zM255 581h1v1h-1zM258 581h3v1h-3zM266 581h1v1h-1zM270 581h2v1h-2zM273 581h9v1h-9zM288 581h1v1h-1zM291 581h2v1h-2zM294 581h1v1h-1zM301 581h1v1h-1zM303 581h1v1h-1zM305 581h1v1h-1zM309 581h2v1h-2zM321 581h2v1h-2zM325 581h1v1h-1zM338 581h1v1h-1zM345 581h2v1h-2zM366 581h1v1h-1zM203 582h6v1h-6zM213 582h2v1h-2zM216 582h2v1h-2zM222 582h2v1h-2zM226 582h1v1h-1zM234 582h1v1h-1zM238 582h5v1h-5zM249 582h2v1h-2zM252 582h4v1h-4zM258 582h1v1h-1zM266 582h2v1h-2zM271 582h8v1h-8zM281 582h1v1h-1zM283 582h6v1h-6zM293 582h2v1h-2zM301 582h1v1h-1zM303 582h1v1h-1zM305 582h1v1h-1zM320 582h3v1h-3zM325 582h1v1h-1zM338 582h1v1h-1zM346 582h2v1h-2zM366 582h2v1h-2zM203 583h2v1h-2zM208 583h4v1h-4zM213 583h1v1h-1zM215 583h2v1h-2zM223 583h1v1h-1zM226 583h2v1h-2zM233 583h9v1h-9zM249 583h1v1h-1zM251 583h2v1h-2zM258 583h1v1h-1zM267 583h1v1h-1zM274 583h1v1h-1zM281 583h3v1h-3zM293 583h1v1h-1zM295 583h2v1h-2zM301 583h1v1h-1zM303 583h1v1h-1zM305 583h1v1h-1zM320 583h2v1h-2zM325 583h1v1h-1zM338 583h2v1h-2zM347 583h1v1h-1zM366 583h2v1h-2zM194 584h5v1h-5zM204 584h3v1h-3zM211 584h1v1h-1zM213 584h1v1h-1zM215 584h1v1h-1zM223 584h1v1h-1zM227 584h2v1h-2zM232 584h2v1h-2zM238 584h3v1h-3zM249 584h3v1h-3zM258 584h1v1h-1zM266 584h4v1h-4zM274 584h1v1h-1zM281 584h3v1h-3zM292 584h2v1h-2zM297 584h2v1h-2zM300 584h6v1h-6zM325 584h1v1h-1zM339 584h2v1h-2zM347 584h1v1h-1zM365 584h2v1h-2zM193 585h2v1h-2zM196 585h2v1h-2zM206 585h1v1h-1zM210 585h4v1h-4zM215 585h1v1h-1zM223 585h1v1h-1zM228 585h1v1h-1zM231 585h3v1h-3zM249 585h4v1h-4zM258 585h1v1h-1zM265 585h3v1h-3zM269 585h3v1h-3zM273 585h1v1h-1zM281 585h4v1h-4zM286 585h7v1h-7zM298 585h4v1h-4zM304 585h1v1h-1zM323 585h3v1h-3zM340 585h8v1h-8zM363 585h3v1h-3zM192 586h2v1h-2zM196 586h3v1h-3zM206 586h1v1h-1zM212 586h2v1h-2zM215 586h1v1h-1zM223 586h1v1h-1zM227 586h2v1h-2zM231 586h1v1h-1zM233 586h1v1h-1zM250 586h6v1h-6zM258 586h1v1h-1zM260 586h7v1h-7zM271 586h3v1h-3zM280 586h2v1h-2zM283 586h4v1h-4zM297 586h2v1h-2zM301 586h1v1h-1zM303 586h2v1h-2zM324 586h1v1h-1zM363 586h1v1h-1zM192 587h4v1h-4zM198 587h1v1h-1zM205 587h2v1h-2zM215 587h1v1h-1zM223 587h1v1h-1zM226 587h2v1h-2zM231 587h1v1h-1zM233 587h1v1h-1zM251 587h6v1h-6zM258 587h3v1h-3zM264 587h2v1h-2zM268 587h6v1h-6zM279 587h2v1h-2zM283 587h1v1h-1zM287 587h3v1h-3zM296 587h2v1h-2zM301 587h1v1h-1zM303 587h1v1h-1zM324 587h1v1h-1zM363 587h1v1h-1zM193 588h1v1h-1zM195 588h4v1h-4zM205 588h1v1h-1zM215 588h1v1h-1zM223 588h1v1h-1zM226 588h1v1h-1zM231 588h1v1h-1zM233 588h1v1h-1zM254 588h3v1h-3zM258 588h1v1h-1zM260 588h1v1h-1zM265 588h4v1h-4zM272 588h4v1h-4zM279 588h1v1h-1zM283 588h1v1h-1zM286 588h2v1h-2zM289 588h4v1h-4zM295 588h2v1h-2zM301 588h1v1h-1zM303 588h1v1h-1zM324 588h1v1h-1zM363 588h1v1h-1zM204 589h8v1h-8zM215 589h1v1h-1zM223 589h1v1h-1zM226 589h1v1h-1zM231 589h1v1h-1zM233 589h1v1h-1zM255 589h4v1h-4zM260 589h1v1h-1zM266 589h2v1h-2zM271 589h1v1h-1zM273 589h4v1h-4zM279 589h1v1h-1zM284 589h1v1h-1zM286 589h1v1h-1zM292 589h4v1h-4zM301 589h3v1h-3zM318 589h2v1h-2zM324 589h1v1h-1zM363 589h2v1h-2zM204 590h3v1h-3zM211 590h1v1h-1zM215 590h1v1h-1zM222 590h2v1h-2zM226 590h1v1h-1zM231 590h3v1h-3zM255 590h6v1h-6zM271 590h1v1h-1zM274 590h3v1h-3zM279 590h1v1h-1zM284 590h3v1h-3zM289 590h4v1h-4zM302 590h3v1h-3zM314 590h6v1h-6zM324 590h1v1h-1zM364 590h2v1h-2zM204 591h2v1h-2zM211 591h2v1h-2zM215 591h2v1h-2zM221 591h2v1h-2zM224 591h1v1h-1zM226 591h1v1h-1zM232 591h3v1h-3zM239 591h4v1h-4zM256 591h2v1h-2zM259 591h1v1h-1zM270 591h1v1h-1zM275 591h2v1h-2zM279 591h6v1h-6zM289 591h1v1h-1zM292 591h4v1h-4zM302 591h1v1h-1zM304 591h1v1h-1zM312 591h3v1h-3zM319 591h6v1h-6zM365 591h3v1h-3zM212 592h3v1h-3zM216 592h11v1h-11zM232 592h3v1h-3zM239 592h2v1h-2zM242 592h2v1h-2zM257 592h3v1h-3zM269 592h1v1h-1zM274 592h3v1h-3zM285 592h1v1h-1zM289 592h1v1h-1zM295 592h1v1h-1zM302 592h1v1h-1zM304 592h1v1h-1zM310 592h3v1h-3zM367 592h2v1h-2zM214 593h1v1h-1zM217 593h5v1h-5zM225 593h3v1h-3zM233 593h1v1h-1zM239 593h3v1h-3zM243 593h1v1h-1zM262 593h3v1h-3zM269 593h1v1h-1zM274 593h3v1h-3zM285 593h1v1h-1zM289 593h1v1h-1zM291 593h3v1h-3zM295 593h2v1h-2zM302 593h1v1h-1zM304 593h7v1h-7zM368 593h1v1h-1zM214 594h1v1h-1zM217 594h1v1h-1zM225 594h1v1h-1zM227 594h1v1h-1zM239 594h1v1h-1zM242 594h2v1h-2zM262 594h4v1h-4zM268 594h1v1h-1zM274 594h2v1h-2zM285 594h1v1h-1zM289 594h1v1h-1zM291 594h1v1h-1zM293 594h1v1h-1zM296 594h1v1h-1zM301 594h2v1h-2zM334 594h3v1h-3zM350 594h6v1h-6zM366 594h3v1h-3zM214 595h1v1h-1zM217 595h2v1h-2zM222 595h4v1h-4zM227 595h1v1h-1zM239 595h4v1h-4zM262 595h4v1h-4zM268 595h1v1h-1zM273 595h3v1h-3zM286 595h1v1h-1zM289 595h5v1h-5zM296 595h1v1h-1zM298 595h4v1h-4zM333 595h2v1h-2zM336 595h2v1h-2zM350 595h1v1h-1zM355 595h1v1h-1zM364 595h3v1h-3zM213 596h2v1h-2zM218 596h2v1h-2zM221 596h5v1h-5zM227 596h3v1h-3zM240 596h2v1h-2zM262 596h4v1h-4zM267 596h1v1h-1zM272 596h4v1h-4zM286 596h1v1h-1zM290 596h1v1h-1zM295 596h4v1h-4zM332 596h2v1h-2zM337 596h2v1h-2zM350 596h1v1h-1zM355 596h1v1h-1zM364 596h1v1h-1zM212 597h2v1h-2zM219 597h5v1h-5zM225 597h6v1h-6zM236 597h5v1h-5zM262 597h1v1h-1zM265 597h1v1h-1zM267 597h1v1h-1zM272 597h3v1h-3zM286 597h1v1h-1zM290 597h2v1h-2zM294 597h2v1h-2zM297 597h1v1h-1zM332 597h1v1h-1zM338 597h1v1h-1zM350 597h1v1h-1zM355 597h1v1h-1zM364 597h1v1h-1zM211 598h2v1h-2zM215 598h8v1h-8zM228 598h1v1h-1zM230 598h1v1h-1zM236 598h1v1h-1zM240 598h1v1h-1zM250 598h3v1h-3zM262 598h1v1h-1zM265 598h2v1h-2zM271 598h3v1h-3zM287 598h1v1h-1zM290 598h2v1h-2zM293 598h3v1h-3zM297 598h1v1h-1zM332 598h2v1h-2zM337 598h2v1h-2zM350 598h1v1h-1zM355 598h1v1h-1zM364 598h1v1h-1zM210 599h2v1h-2zM213 599h1v1h-1zM215 599h1v1h-1zM220 599h1v1h-1zM228 599h4v1h-4zM235 599h2v1h-2zM239 599h2v1h-2zM247 599h4v1h-4zM252 599h11v1h-11zM265 599h1v1h-1zM271 599h2v1h-2zM287 599h1v1h-1zM289 599h2v1h-2zM295 599h3v1h-3zM333 599h2v1h-2zM336 599h2v1h-2zM350 599h6v1h-6zM364 599h1v1h-1zM200 600h2v1h-2zM210 600h1v1h-1zM212 600h2v1h-2zM215 600h1v1h-1zM229 600h3v1h-3zM233 600h3v1h-3zM239 600h1v1h-1zM244 600h4v1h-4zM249 600h3v1h-3zM260 600h4v1h-4zM265 600h1v1h-1zM270 600h3v1h-3zM286 600h4v1h-4zM296 600h3v1h-3zM334 600h3v1h-3zM364 600h1v1h-1zM200 601h2v1h-2zM210 601h2v1h-2zM213 601h3v1h-3zM230 601h4v1h-4zM238 601h2v1h-2zM242 601h8v1h-8zM251 601h2v1h-2zM258 601h3v1h-3zM263 601h10v1h-10zM283 601h10v1h-10zM296 601h1v1h-1zM364 601h1v1h-1zM211 602h3v1h-3zM221 602h3v1h-3zM231 602h2v1h-2zM236 602h3v1h-3zM241 602h2v1h-2zM244 602h2v1h-2zM252 602h1v1h-1zM259 602h1v1h-1zM264 602h2v1h-2zM270 602h2v1h-2zM282 602h7v1h-7zM292 602h1v1h-1zM364 602h1v1h-1zM205 603h2v1h-2zM220 603h2v1h-2zM223 603h1v1h-1zM232 603h1v1h-1zM235 603h2v1h-2zM241 603h4v1h-4zM252 603h1v1h-1zM254 603h3v1h-3zM259 603h2v1h-2zM265 603h6v1h-6zM281 603h4v1h-4zM292 603h1v1h-1zM364 603h2v1h-2zM205 604h2v1h-2zM220 604h4v1h-4zM232 604h1v1h-1zM234 604h2v1h-2zM242 604h3v1h-3zM252 604h3v1h-3zM256 604h2v1h-2zM260 604h1v1h-1zM265 604h6v1h-6zM281 604h1v1h-1zM283 604h1v1h-1zM292 604h1v1h-1zM363 604h2v1h-2zM219 605h2v1h-2zM231 605h4v1h-4zM242 605h3v1h-3zM252 605h2v1h-2zM257 605h2v1h-2zM260 605h2v1h-2zM264 605h2v1h-2zM270 605h2v1h-2zM281 605h1v1h-1zM283 605h6v1h-6zM291 605h2v1h-2zM311 605h7v1h-7zM362 605h2v1h-2zM218 606h2v1h-2zM231 606h3v1h-3zM243 606h4v1h-4zM251 606h3v1h-3zM258 606h1v1h-1zM261 606h9v1h-9zM271 606h2v1h-2zM281 606h2v1h-2zM288 606h4v1h-4zM300 606h6v1h-6zM311 606h1v1h-1zM317 606h2v1h-2zM361 606h2v1h-2zM217 607h3v1h-3zM223 607h2v1h-2zM230 607h3v1h-3zM244 607h1v1h-1zM246 607h8v1h-8zM258 607h2v1h-2zM262 607h2v1h-2zM265 607h1v1h-1zM269 607h1v1h-1zM272 607h1v1h-1zM282 607h1v1h-1zM285 607h4v1h-4zM300 607h1v1h-1zM305 607h2v1h-2zM311 607h1v1h-1zM318 607h1v1h-1zM359 607h3v1h-3zM216 608h2v1h-2zM219 608h1v1h-1zM222 608h4v1h-4zM230 608h3v1h-3zM244 608h1v1h-1zM251 608h2v1h-2zM259 608h4v1h-4zM265 608h1v1h-1zM268 608h2v1h-2zM271 608h2v1h-2zM282 608h4v1h-4zM288 608h2v1h-2zM300 608h1v1h-1zM306 608h2v1h-2zM311 608h1v1h-1zM318 608h1v1h-1zM348 608h4v1h-4zM359 608h1v1h-1zM215 609h2v1h-2zM219 609h4v1h-4zM225 609h1v1h-1zM233 609h1v1h-1zM236 609h2v1h-2zM244 609h1v1h-1zM248 609h4v1h-4zM262 609h2v1h-2zM265 609h7v1h-7zM288 609h2v1h-2zM300 609h1v1h-1zM307 609h2v1h-2zM311 609h3v1h-3zM316 609h3v1h-3zM346 609h3v1h-3zM351 609h1v1h-1zM359 609h1v1h-1zM215 610h1v1h-1zM225 610h1v1h-1zM233 610h2v1h-2zM243 610h2v1h-2zM248 610h1v1h-1zM263 610h2v1h-2zM267 610h3v1h-3zM288 610h1v1h-1zM300 610h2v1h-2zM308 610h2v1h-2zM313 610h4v1h-4zM318 610h6v1h-6zM346 610h1v1h-1zM351 610h2v1h-2zM359 610h1v1h-1zM215 611h1v1h-1zM225 611h1v1h-1zM233 611h2v1h-2zM241 611h3v1h-3zM248 611h1v1h-1zM264 611h1v1h-1zM266 611h2v1h-2zM288 611h1v1h-1zM301 611h2v1h-2zM309 611h1v1h-1zM317 611h2v1h-2zM323 611h1v1h-1zM346 611h1v1h-1zM352 611h2v1h-2zM358 611h2v1h-2zM215 612h1v1h-1zM223 612h3v1h-3zM232 612h4v1h-4zM238 612h4v1h-4zM248 612h2v1h-2zM264 612h3v1h-3zM268 612h5v1h-5zM282 612h7v1h-7zM302 612h3v1h-3zM309 612h1v1h-1zM317 612h1v1h-1zM323 612h1v1h-1zM346 612h1v1h-1zM353 612h2v1h-2zM356 612h3v1h-3zM215 613h1v1h-1zM218 613h6v1h-6zM232 613h1v1h-1zM235 613h4v1h-4zM249 613h2v1h-2zM264 613h2v1h-2zM267 613h2v1h-2zM272 613h11v1h-11zM304 613h3v1h-3zM309 613h1v1h-1zM313 613h5v1h-5zM323 613h1v1h-1zM346 613h1v1h-1zM354 613h3v1h-3zM215 614h2v1h-2zM218 614h1v1h-1zM231 614h2v1h-2zM250 614h1v1h-1zM263 614h3v1h-3zM267 614h1v1h-1zM273 614h2v1h-2zM276 614h5v1h-5zM306 614h4v1h-4zM312 614h2v1h-2zM317 614h1v1h-1zM322 614h2v1h-2zM344 614h3v1h-3zM216 615h3v1h-3zM225 615h1v1h-1zM230 615h2v1h-2zM250 615h6v1h-6zM263 615h1v1h-1zM265 615h1v1h-1zM267 615h1v1h-1zM275 615h2v1h-2zM280 615h2v1h-2zM283 615h5v1h-5zM312 615h1v1h-1zM318 615h5v1h-5zM342 615h3v1h-3zM346 615h1v1h-1zM224 616h7v1h-7zM255 616h3v1h-3zM262 616h2v1h-2zM265 616h1v1h-1zM267 616h2v1h-2zM273 616h3v1h-3zM281 616h1v1h-1zM283 616h1v1h-1zM287 616h2v1h-2zM312 616h1v1h-1zM318 616h1v1h-1zM342 616h1v1h-1zM224 617h1v1h-1zM257 617h6v1h-6zM264 617h2v1h-2zM268 617h2v1h-2zM272 617h2v1h-2zM281 617h1v1h-1zM283 617h1v1h-1zM288 617h1v1h-1zM312 617h1v1h-1zM318 617h1v1h-1zM342 617h1v1h-1zM223 618h2v1h-2zM264 618h3v1h-3zM269 618h2v1h-2zM272 618h1v1h-1zM281 618h1v1h-1zM283 618h2v1h-2zM288 618h1v1h-1zM312 618h1v1h-1zM318 618h2v1h-2zM342 618h3v1h-3zM219 619h2v1h-2zM222 619h2v1h-2zM266 619h2v1h-2zM270 619h1v1h-1zM272 619h2v1h-2zM279 619h3v1h-3zM284 619h5v1h-5zM312 619h2v1h-2zM319 619h1v1h-1zM344 619h1v1h-1zM218 620h5v1h-5zM267 620h2v1h-2zM270 620h1v1h-1zM273 620h3v1h-3zM277 620h3v1h-3zM313 620h2v1h-2zM319 620h1v1h-1zM344 620h2v1h-2zM212 621h1v1h-1zM217 621h2v1h-2zM223 621h5v1h-5zM241 621h5v1h-5zM252 621h6v1h-6zM268 621h3v1h-3zM274 621h1v1h-1zM277 621h2v1h-2zM280 621h4v1h-4zM314 621h1v1h-1zM319 621h1v1h-1zM345 621h1v1h-1zM213 622h1v1h-1zM216 622h2v1h-2zM222 622h2v1h-2zM227 622h2v1h-2zM239 622h3v1h-3zM245 622h2v1h-2zM252 622h1v1h-1zM257 622h1v1h-1zM269 622h1v1h-1zM274 622h1v1h-1zM278 622h1v1h-1zM280 622h1v1h-1zM283 622h2v1h-2zM314 622h1v1h-1zM319 622h3v1h-3zM340 622h7v1h-7zM213 623h4v1h-4zM222 623h1v1h-1zM228 623h1v1h-1zM239 623h1v1h-1zM246 623h2v1h-2zM252 623h1v1h-1zM257 623h1v1h-1zM274 623h1v1h-1zM277 623h2v1h-2zM280 623h1v1h-1zM284 623h1v1h-1zM314 623h1v1h-1zM321 623h2v1h-2zM340 623h1v1h-1zM213 624h1v1h-1zM222 624h1v1h-1zM228 624h2v1h-2zM239 624h1v1h-1zM247 624h1v1h-1zM252 624h1v1h-1zM257 624h1v1h-1zM274 624h4v1h-4zM280 624h1v1h-1zM284 624h2v1h-2zM314 624h1v1h-1zM322 624h2v1h-2zM340 624h1v1h-1zM212 625h5v1h-5zM221 625h2v1h-2zM229 625h1v1h-1zM239 625h1v1h-1zM247 625h1v1h-1zM252 625h1v1h-1zM257 625h1v1h-1zM280 625h1v1h-1zM285 625h1v1h-1zM300 625h6v1h-6zM314 625h1v1h-1zM323 625h1v1h-1zM340 625h1v1h-1zM212 626h1v1h-1zM216 626h1v1h-1zM221 626h1v1h-1zM229 626h1v1h-1zM239 626h2v1h-2zM246 626h2v1h-2zM252 626h1v1h-1zM257 626h2v1h-2zM267 626h3v1h-3zM276 626h5v1h-5zM285 626h1v1h-1zM300 626h1v1h-1zM305 626h2v1h-2zM314 626h2v1h-2zM322 626h2v1h-2zM340 626h1v1h-1zM216 627h1v1h-1zM221 627h1v1h-1zM228 627h2v1h-2zM240 627h2v1h-2zM245 627h2v1h-2zM252 627h2v1h-2zM258 627h1v1h-1zM267 627h1v1h-1zM269 627h1v1h-1zM276 627h2v1h-2zM284 627h2v1h-2zM300 627h1v1h-1zM306 627h2v1h-2zM315 627h8v1h-8zM340 627h1v1h-1zM215 628h2v1h-2zM221 628h2v1h-2zM228 628h2v1h-2zM234 628h4v1h-4zM241 628h5v1h-5zM253 628h1v1h-1zM258 628h1v1h-1zM267 628h3v1h-3zM277 628h2v1h-2zM284 628h1v1h-1zM300 628h1v1h-1zM307 628h2v1h-2zM340 628h1v1h-1zM215 629h4v1h-4zM222 629h1v1h-1zM229 629h6v1h-6zM237 629h2v1h-2zM253 629h1v1h-1zM258 629h1v1h-1zM278 629h3v1h-3zM283 629h2v1h-2zM300 629h2v1h-2zM308 629h2v1h-2zM336 629h5v1h-5zM218 630h1v1h-1zM222 630h1v1h-1zM233 630h1v1h-1zM238 630h2v1h-2zM253 630h1v1h-1zM258 630h1v1h-1zM280 630h4v1h-4zM301 630h1v1h-1zM309 630h2v1h-2zM336 630h1v1h-1zM339 630h1v1h-1zM218 631h6v1h-6zM239 631h1v1h-1zM253 631h6v1h-6zM301 631h2v1h-2zM310 631h1v1h-1zM336 631h1v1h-1zM217 632h2v1h-2zM232 632h1v1h-1zM239 632h1v1h-1zM302 632h2v1h-2zM310 632h2v1h-2zM336 632h1v1h-1zM216 633h3v1h-3zM231 633h3v1h-3zM238 633h2v1h-2zM252 633h4v1h-4zM303 633h1v1h-1zM311 633h2v1h-2zM336 633h1v1h-1zM216 634h2v1h-2zM230 634h2v1h-2zM233 634h6v1h-6zM251 634h2v1h-2zM255 634h2v1h-2zM303 634h2v1h-2zM312 634h1v1h-1zM336 634h1v1h-1zM215 635h3v1h-3zM230 635h1v1h-1zM251 635h1v1h-1zM256 635h2v1h-2zM304 635h2v1h-2zM312 635h2v1h-2zM336 635h1v1h-1zM215 636h2v1h-2zM230 636h1v1h-1zM251 636h1v1h-1zM257 636h1v1h-1zM305 636h2v1h-2zM313 636h1v1h-1zM326 636h5v1h-5zM332 636h5v1h-5zM216 637h1v1h-1zM230 637h1v1h-1zM251 637h1v1h-1zM257 637h1v1h-1zM306 637h2v1h-2zM313 637h1v1h-1zM320 637h4v1h-4zM326 637h1v1h-1zM330 637h3v1h-3zM230 638h2v1h-2zM251 638h1v1h-1zM256 638h2v1h-2zM307 638h3v1h-3zM313 638h1v1h-1zM320 638h1v1h-1zM323 638h4v1h-4zM331 638h1v1h-1zM231 639h1v1h-1zM251 639h6v1h-6zM309 639h5v1h-5zM320 639h1v1h-1zM324 639h2v1h-2zM230 640h2v1h-2zM299 640h3v1h-3zM315 640h3v1h-3zM319 640h2v1h-2zM325 640h1v1h-1zM230 641h1v1h-1zM298 641h2v1h-2zM301 641h3v1h-3zM314 641h2v1h-2zM317 641h3v1h-3zM229 642h2v1h-2zM234 642h9v1h-9zM298 642h1v1h-1zM303 642h2v1h-2zM314 642h1v1h-1zM319 642h1v1h-1zM229 643h1v1h-1zM231 643h4v1h-4zM242 643h2v1h-2zM298 643h2v1h-2zM304 643h1v1h-1zM311 643h4v1h-4zM229 644h3v1h-3zM243 644h1v1h-1zM299 644h1v1h-1zM304 644h1v1h-1zM309 644h3v1h-3zM242 645h2v1h-2zM298 645h2v1h-2zM304 645h1v1h-1zM308 645h2v1h-2zM242 646h1v1h-1zM298 646h1v1h-1zM304 646h1v1h-1zM308 646h1v1h-1zM242 647h2v1h-2zM298 647h2v1h-2zM304 647h1v1h-1zM308 647h1v1h-1zM243 648h1v1h-1zM299 648h1v1h-1zM303 648h2v1h-2zM306 648h3v1h-3zM243 649h2v1h-2zM258 649h7v1h-7zM299 649h2v1h-2zM302 649h5v1h-5zM244 650h2v1h-2zM249 650h4v1h-4zM257 650h2v1h-2zM261 650h2v1h-2zM264 650h7v1h-7zM300 650h4v1h-4zM330 650h1v1h-1zM245 651h5v1h-5zM252 651h1v1h-1zM257 651h1v1h-1zM270 651h1v1h-1zM303 651h1v1h-1zM246 652h2v1h-2zM252 652h1v1h-1zM256 652h2v1h-2zM270 652h1v1h-1zM303 652h2v1h-2zM324 652h2v1h-2zM252 653h2v1h-2zM255 653h2v1h-2zM270 653h1v1h-1zM304 653h1v1h-1zM324 653h2v1h-2zM253 654h3v1h-3zM270 654h1v1h-1zM304 654h2v1h-2zM229 655h2v1h-2zM253 655h2v1h-2zM270 655h1v1h-1zM305 655h2v1h-2zM229 656h2v1h-2zM253 656h1v1h-1zM269 656h2v1h-2zM290 656h4v1h-4zM305 656h2v1h-2zM233 657h1v1h-1zM269 657h2v1h-2zM285 657h6v1h-6zM293 657h10v1h-10zM305 657h1v1h-1zM270 658h1v1h-1zM282 658h4v1h-4zM289 658h2v1h-2zM294 658h1v1h-1zM302 658h4v1h-4zM270 659h3v1h-3zM274 659h4v1h-4zM282 659h1v1h-1zM284 659h2v1h-2zM272 660h3v1h-3zM277 660h1v1h-1zM282 660h1v1h-1zM277 661h2v1h-2zM282 661h1v1h-1zM278 662h5v1h-5zM279 663h2v1h-2z"/></svg>
<svg id="icons" class="abs" width="1020" height="1020" viewBox="0 0 1020 1020">
<defs>
<pattern id="spk" width="3" height="3" patternUnits="userSpaceOnUse"><rect width="3" height="3" fill="#b4b4b4"/><rect x="0" y="0" width="1" height="1" fill="#666"/><rect x="2" y="1" width="1" height="1" fill="#e8e8e8"/><rect x="1" y="2" width="1" height="1" fill="#5e5e5e"/></pattern>
<pattern id="spk2" width="3" height="3" patternUnits="userSpaceOnUse"><rect width="3" height="3" fill="#dcdcdc"/><rect x="0" y="0" width="1" height="1" fill="#555"/><rect x="2" y="1.5" width="1" height="1" fill="#666"/></pattern>
<pattern id="chk" width="2" height="2" patternUnits="userSpaceOnUse"><rect width="2" height="2" fill="#5a5a5a"/><rect width="1" height="1" fill="#707070"/><rect x="1" y="1" width="1" height="1" fill="#707070"/></pattern>
<filter id="nz" x="-0.1" y="-0.1" width="1.2" height="1.2" color-interpolation-filters="sRGB"><feTurbulence type="fractalNoise" baseFrequency="0.55" numOctaves="2" seed="4" result="t"/><feColorMatrix in="t" type="matrix" values="1.05 0 0 0 0.14  1.05 0 0 0 0.14  1.05 0 0 0 0.14  0 0 0 0 1" result="g"/><feComposite in="g" in2="SourceGraphic" operator="in" result="c"/><feGaussianBlur in="c" stdDeviation="0.35"/></filter>
</defs>
<!-- options bar -->
<line x1="7" y1="44" x2="7" y2="68" stroke="#454545" stroke-width="2" stroke-dasharray="1.2 1.2"/>
<path d="M35.5 47 L46.4 58.2 L43.3 58.2 L43.3 65.5 L37.7 65.5 L37.7 59.6 L33.3 59.6 L33.3 65.5 L27.8 65.5 L27.8 58.2 L24.6 58.2 Z" fill="#dedede"/>
<g fill="#dcdcdc" transform="translate(76.5,46.3)">
<path d="M18.7 0.1 C19.5 0.5 19.5 1.5 19 2.2 L12 12.7 L8.6 10.3 L16.9 0.7 C17.4 0.1 18.1 -0.2 18.7 0.1Z"/>
<path d="M7.9 11 L11.4 13.5 C12.1 16.1 10 18.4 7 18.7 C4.6 19 2.2 19.5 0.1 19.7 C1.6 18.6 1.8 17 2.3 15 C3 12.2 5.6 10.4 7.9 11Z"/>
</g>
<polyline points="109.5,56 113.4,59.8 117.3,56" fill="none" stroke="#cfcfcf" stroke-width="1.2"/>
<circle cx="156.2" cy="49.2" r="10.3" fill="#b0b0b0" filter="url(#nz)"/>
<polyline points="177.6,56 181.8,60 186,56" fill="none" stroke="#cfcfcf" stroke-width="1.2"/>
<path d="M203.8 45.9 L213.5 45.9 L215.3 47.7 L225.3 47.7 L225.3 67 L203.8 67 Z" fill="#d6d6d6"/>
<g fill="#535353" transform="translate(207.6,50.3) scale(0.73)">
<path d="M18.7 0.1 C19.5 0.5 19.5 1.5 19 2.2 L12 12.7 L8.6 10.3 L16.9 0.7 C17.4 0.1 18.1 -0.2 18.7 0.1Z"/>
<path d="M7.9 11 L11.4 13.5 C12.1 16.1 10 18.4 7 18.7 C4.6 19 2.2 19.5 0.1 19.7 C1.6 18.6 1.8 17 2.3 15 C3 12.2 5.6 10.4 7.9 11Z"/>
</g>
<polyline points="437.2,59 441,62.7 444.8,59" fill="none" stroke="#d0d0d0" stroke-width="1.2"/>
<polyline points="581.2,55.7 585.2,59.5 589.2,55.7" fill="none" stroke="#d0d0d0" stroke-width="1.2"/>
<polyline points="741.2,55.7 745.3,59.6 749.4,55.7" fill="none" stroke="#d0d0d0" stroke-width="1.2"/>
<polyline points="935.3,55.7 939,59.4 942.8,55.7" fill="none" stroke="#6c6c6c" stroke-width="1.2"/>
<!-- pressure for opacity -->
<circle cx="617.9" cy="58.5" r="8.3" fill="url(#chk)" stroke="#cfcfcf" stroke-width="1.3"/>
<g transform="translate(617.3,59.6) rotate(-45)">
<path d="M0 0 L3.6 -2.1 L16.3 -2.1 C17.4 -2.1 17.9 -1.3 17.9 0 C17.9 1.3 17.4 2.1 16.3 2.1 L3.6 2.1 Z" fill="#dcdcdc" stroke="#535353" stroke-width="0.8"/>
<line x1="14" y1="-2.1" x2="14" y2="2.1" stroke="#535353" stroke-width="0.8"/>
</g>
<!-- airbrush -->
<path d="M776.8 48.2 C770.2 49.2 767.2 53 767.4 56.8 C767.6 59.8 769.4 62 772.6 63.1 C771.4 60.8 771.2 58.6 771.6 56 C772.2 52.8 774 50.2 776.8 48.2Z" fill="#8c8c8c" stroke="#8c8c8c" stroke-width="0.8" stroke-linejoin="round"/>
<g transform="translate(774.9,63.1) rotate(-39)">
<path d="M0.6 -1.4 L12.6 -2 V2 L11.2 1.95 V6.4 A0.8 0.8 0 0 1 10.4 7.2 H8.8 A0.8 0.8 0 0 1 8 6.4 V1.75 L0.6 1.4 A1.4 1.4 0 0 1 0.6 -1.4Z" fill="none" stroke="#e2e2e2" stroke-width="1.15" stroke-linejoin="round"/>
<path d="M12 -2.6 H15.4 C17.2 -2.6 18 -1.4 18 0 C18 1.4 17.2 2.6 15.4 2.6 H12Z" fill="#e2e2e2"/>
<circle cx="19.8" cy="-0.6" r="1.25" fill="#e6e6e6"/>
</g>
<!-- gear -->
<g transform="translate(969.8,56.5)" fill="#dedede">
<circle r="6" />
<g id="teeth"><rect x="-1.7" y="-8.2" width="3.4" height="16.4"/><rect x="-8.2" y="-1.7" width="16.4" height="3.4"/><rect x="-1.7" y="-8.2" width="3.4" height="16.4" transform="rotate(45)"/><rect x="-1.7" y="-8.2" width="3.4" height="16.4" transform="rotate(-45)"/></g>
<circle r="2.9" fill="#535353"/>
</g>
<path d="M976.6 64.7 L981.4 64.7 L979 67.4 Z" fill="#e4e4e4"/>
<!-- angle -->
<path d="M1013.2 50 L1000.6 60.3 L1016 60.3" fill="none" stroke="#d6d6d6" stroke-width="1.3" stroke-linejoin="miter"/>
<path d="M1010.7 52.4 A9 9 0 0 1 1012.9 60" fill="none" stroke="#d6d6d6" stroke-width="1.1"/>
<!-- tab close -->
<path d="M320.2 92.8 L328.2 100.6 M328.2 92.8 L320.2 100.6" stroke="#b4b4b4" stroke-width="1" fill="none"/>
<!-- toolbar head -->
<polyline points="9,82.5 11.5,84.8 9,87.1" fill="none" stroke="#e0e0e0" stroke-width="1.1"/>
<polyline points="12.8,82.5 15.3,84.8 12.8,87.1" fill="none" stroke="#e0e0e0" stroke-width="1.1"/>
<line x1="12" y1="99.5" x2="36.5" y2="99.5" stroke="#464646" stroke-width="4.6" stroke-dasharray="1 1.35"/>
<!-- status arrows -->
<polyline points="330,1006 333.8,1011 330,1016" fill="none" stroke="#cfcfcf" stroke-width="1.2"/>
<polyline points="356.6,1007.5 352.8,1011 356.6,1014.5" fill="none" stroke="#7a7a7a" stroke-width="1.2"/>
<!-- TOOLS -->
<g fill="#b2b2b2">
<path d="M40.1 137 L40.1 141 L36 141 Z"/><path d="M40.1 170 L40.1 174 L36 174 Z"/><path d="M40.1 202.2 L40.1 206.2 L36 206.2 Z"/>
<path d="M40.1 235 L40.1 239 L36 239 Z"/><path d="M40.1 300.2 L40.1 304.2 L36 304.2 Z"/><path d="M40.1 332 L40.1 336 L36 336 Z"/>
<path d="M40.1 462 L40.1 466 L36 466 Z"/><path d="M40.1 495.3 L40.1 499.3 L36 499.3 Z"/><path d="M40.1 527 L40.1 531 L36 531 Z"/>
<path d="M40.1 560.2 L40.1 564.2 L36 564.2 Z"/><path d="M40.1 690 L40.1 694 L36 694 Z"/><path d="M40.1 722.3 L40.1 726.3 L36 726.3 Z"/>
<path d="M40.1 755.2 L40.1 759.2 L36 759.2 Z"/><path d="M40.1 787.3 L40.1 791.3 L36 791.3 Z"/><path d="M40.1 820 L40.1 824 L36 824 Z"/>
<path d="M40.1 885.3 L40.1 889.3 L36 889.3 Z"/>
</g>
<!-- move -->
<g stroke="#dadada" stroke-width="1.4" fill="none"><path d="M22.4 122.5 V137.5 M14.8 130 H30"/></g>
<g fill="#dadada"><path d="M22.4 120.8 L25.3 124.8 H19.5Z"/><path d="M22.4 139.2 L25.3 135.2 H19.5Z"/><path d="M13.3 130 L17.2 127.1 V132.9Z"/><path d="M31.5 130 L27.6 127.1 V132.9Z"/></g>
<!-- marquee -->
<path d="M13.6 157.1 V154 H18 M20.4 154 H25.6 M28.1 154 H32.4 V157.1 M32.4 159.8 V163.7 M32.4 166 V169.3 H28.1 M25.6 169.3 H20.4 M18 169.3 H13.6 V166 M13.6 163.7 V159.8" fill="none" stroke="#dadada" stroke-width="1.4"/>
<!-- polygonal lasso -->
<g fill="none" stroke="#dadada" stroke-width="1.25" stroke-linejoin="miter">
<path d="M20.6 197.6 L13.6 187.6 L25 192.2 L32.7 185.2 L32.9 195.9 L23.4 199.5"/>
<circle cx="21.7" cy="199" r="1.9"/>
<path d="M20 199.8 L13.9 202.4 M22.6 200.8 L19.4 204.9"/>
</g>
<!-- magic wand -->
<g transform="translate(15.9,236) rotate(-45)">
<rect x="-2.3" y="-2.3" width="19.8" height="4.6" rx="2.3" fill="#dadada"/>
<rect x="10.6" y="-1" width="5.6" height="2" rx="1" fill="#535353"/>
</g>
<g fill="#dadada"><path d="M22.2 216.6 L22.9 218.7 L25 219.4 L22.9 220.1 L22.2 222.2 L21.5 220.1 L19.4 219.4 L21.5 218.7Z M32.4 216 L33.3 218.5 L35.8 219.4 L33.3 220.3 L32.4 222.8 L31.5 220.3 L29 219.4 L31.5 218.5Z M33.5 223.9 L34.1 225.7 L35.9 226.3 L34.1 226.9 L33.5 228.7 L32.9 226.9 L31.1 226.3 L32.9 225.7Z"/></g>
<!-- crop -->
<g fill="#dcdcdc"><rect x="10.7" y="251.8" width="2.9" height="2.6"/><rect x="14.6" y="251.8" width="15" height="2.6"/><rect x="26.8" y="251.8" width="2.8" height="17.2"/>
<rect x="15.3" y="248.3" width="2.9" height="17.3"/><rect x="15.3" y="263" width="14.3" height="2.6"/><rect x="30.8" y="263" width="2.9" height="2.6"/></g>
<!-- eyedropper -->
<g transform="translate(13.9,300.8) rotate(-43.5)">
<path d="M1.6 -1.9 H13 V1.9 H1.6 A1.9 1.9 0 0 1 1.6 -1.9Z" fill="none" stroke="#dadada" stroke-width="1.2"/>
<rect x="12.6" y="-5.4" width="3.9" height="10.8" fill="#dadada"/>
<path d="M16 -2.2 H21.5 A2.7 2.7 0 0 1 21.5 3.2 H16Z" transform="translate(0,-0.5)" fill="#dadada"/>
</g>
<!-- brush (selected) -->
<g fill="#dedede" transform="translate(13.7,315.2) scale(0.945,0.965)">
<path d="M18.7 0.1 C19.5 0.5 19.5 1.5 19 2.2 L12 12.7 L8.6 10.3 L16.9 0.7 C17.4 0.1 18.1 -0.2 18.7 0.1Z"/>
<path d="M7.9 11 L11.4 13.5 C12.1 16.1 10 18.4 7 18.7 C4.6 19 2.2 19.5 0.1 19.7 C1.6 18.6 1.8 17 2.3 15 C3 12.2 5.6 10.4 7.9 11Z"/>
</g>
<!-- pencil -->
<g transform="translate(13.2,366.7) rotate(-43.8)">
<path d="M0 0 L5.2 -2.7 H24.6 V2.7 H5.2 Z" fill="#7a7a7a" stroke="#dadada" stroke-width="1.2" stroke-linejoin="round"/>
<rect x="19.6" y="-3.3" width="5.6" height="6.6" fill="#dadada"/>
<path d="M0 0 L5.2 -2.7 V2.7Z" fill="#535353" stroke="#dadada" stroke-width="1.1" stroke-linejoin="round"/>
</g>
<!-- color replacement -->
<rect x="9.8" y="385.2" width="5.2" height="5" fill="#7a7a7a" stroke="#dadada" stroke-width="1.2"/>
<path d="M15.2 381.2 C18.6 380.2 20.6 382.4 20.4 385" fill="none" stroke="#dadada" stroke-width="1.2"/>
<path d="M13.2 381.6 L16.4 379.4 V383.6Z M20.4 387.4 L18.2 384.4 H22.5Z" fill="#dadada"/>
<g fill="#dadada" transform="translate(14.2,380.7) scale(0.925,0.92)">
<path d="M18.7 0.1 C19.5 0.5 19.5 1.5 19 2.2 L12 12.7 L8.6 10.3 L16.9 0.7 C17.4 0.1 18.1 -0.2 18.7 0.1Z"/>
<path d="M7.9 11 L11.4 13.5 C12.1 16.1 10 18.4 7 18.7 C4.6 19 2.2 19.5 0.1 19.7 C1.6 18.6 1.8 17 2.3 15 C3 12.2 5.6 10.4 7.9 11Z"/>
</g>
<!-- mixer brush -->
<path d="M12.3 415.6 C13.6 418 16.1 419.8 16.1 421.8 A3.55 3.4 0 0 1 9 421.8 C9 419.8 11.2 418 12.3 415.6Z" fill="#dadada"/>
<g fill="#dadada" transform="translate(15.2,413.8) scale(0.93,0.92)">
<path d="M18.7 0.1 C19.5 0.5 19.5 1.5 19 2.2 L12 12.7 L8.6 10.3 L16.9 0.7 C17.4 0.1 18.1 -0.2 18.7 0.1Z"/>
<path d="M7.9 11 L11.4 13.5 C12.1 16.1 10 18.4 7 18.7 C4.6 19 2.2 19.5 0.1 19.7 C1.6 18.6 1.8 17 2.3 15 C3 12.2 5.6 10.4 7.9 11Z"/>
</g>
<!-- stamp -->
<g fill="#dadada"><circle cx="23.8" cy="449.6" r="4.1"/><path d="M21.6 451.5 H26 L25.6 457.6 H32.4 V462 H15.3 V457.6 H22 Z"/><rect x="16.8" y="463" width="13.8" height="1.1"/></g>
<!-- history brush -->
<path d="M12 485.6 L15.3 481.4 L18.3 485.6Z" fill="#dadada"/>
<path d="M15.6 484 C17 481.2 21 480 24.6 481.8" fill="none" stroke="#dadada" stroke-width="1.2"/>
<path d="M30.6 486.6 C31.4 490 29.8 493 27 494.6" fill="none" stroke="#cacaca" stroke-width="1.2" stroke-dasharray="1.1 1.4"/>
<g fill="#dadada" transform="translate(14.7,478.4) scale(0.955,0.935)">
<path d="M18.7 0.1 C19.5 0.5 19.5 1.5 19 2.2 L12 12.7 L8.6 10.3 L16.9 0.7 C17.4 0.1 18.1 -0.2 18.7 0.1Z"/>
<path d="M7.9 11 L11.4 13.5 C12.1 16.1 10 18.4 7 18.7 C4.6 19 2.2 19.5 0.1 19.7 C1.6 18.6 1.8 17 2.3 15 C3 12.2 5.6 10.4 7.9 11Z"/>
</g>
<!-- eraser -->
<path d="M25.5 511.2 L31.1 516.4 L24.4 523.8 L18.9 519.3 Z" fill="#dadada"/>
<path d="M18.9 519.3 L13.5 523.6 L16.9 527.2 H21.6 L24.4 523.8 M16.9 527.3 H31.8" fill="none" stroke="#dadada" stroke-width="1.2" stroke-linejoin="round"/>
<!-- bucket -->
<path d="M23 544.2 L30.5 552.6 L21.4 561.5 L13.5 553.6 Z" fill="none" stroke="#dadada" stroke-width="1.25" stroke-linejoin="round"/>
<path d="M23.6 550.4 L19.4 544.2 C18.4 542.8 17.2 542.4 17.5 543.8 C17.8 545.2 19.4 547.2 20.6 548.4" fill="none" stroke="#dadada" stroke-width="1.1"/>
<circle cx="23.7" cy="550.5" r="1.3" fill="#dadada"/>
<path d="M31.4 553.4 C33 553.8 35.3 556 35.3 557.6 A2.6 2.6 0 0 1 30.1 557.6 C30.1 556 30.6 555 31.4 553.4Z" fill="#dadada"/>
<!-- blur -->
<path d="M22.4 575 C24.4 579.4 29.4 583 29.4 587.2 A6.3 6.2 0 0 1 16.8 587.2 C16.8 583 20.8 579.4 22.4 575Z" fill="#dadada"/>
<!-- smudge -->
<path d="M15.3 627 C17.4 623.6 18.4 620.6 18.2 618.6 C16.6 617 16.4 612.6 18.6 610.2 C21.2 607.6 29 607.8 31.4 608.6 C33.2 609.6 33.2 613.4 31.6 616.4 C30 619 27.4 621.6 25.2 622.4 C26.6 620.4 27.6 618.2 27.8 616.6 C26 618 24.8 619 23.6 619.4 C22 622.6 19.6 625.6 17.8 627 Z" fill="#dadada"/>
<!-- sponge -->
<ellipse cx="22.9" cy="649.2" rx="10.1" ry="8.7" fill="#e2e2e2" transform="rotate(-14 22.9 649.2)"/>
<g fill="#4c4c4c" transform="rotate(-14 22.9 649.2)"><rect x="28.8" y="645.4" width="2.4" height="1.5" rx="0.5"/><rect x="24.0" y="652.8" width="2.4" height="1.5" rx="0.5"/><rect x="21.8" y="642.0" width="1.9" height="1.2" rx="0.5"/><rect x="18.8" y="651.7" width="1.9" height="1.2" rx="0.5"/><rect x="25.8" y="649.4" width="2.4" height="1.2" rx="0.5"/><rect x="18.9" y="643.9" width="1.9" height="1.2" rx="0.5"/><rect x="24.5" y="645.9" width="2.4" height="1.2" rx="0.5"/><rect x="22.3" y="649.5" width="1.9" height="1.2" rx="0.5"/><rect x="19.2" y="647.0" width="2.4" height="1.2" rx="0.5"/><rect x="16.7" y="649.6" width="2.4" height="1.2" rx="0.5"/><rect x="15.7" y="646.6" width="1.5" height="1.2" rx="0.5"/><rect x="21.2" y="654.7" width="1.5" height="1.5" rx="0.5"/><rect x="28.6" y="648.4" width="1.5" height="1.2" rx="0.5"/><rect x="28.2" y="652.6" width="2.4" height="1.5" rx="0.5"/><rect x="25.2" y="643.0" width="1.9" height="1.5" rx="0.5"/><rect x="15.7" y="652.5" width="2.4" height="1.5" rx="0.5"/><rect x="21.5" y="645.1" width="2.4" height="1.5" rx="0.5"/><rect x="18.2" y="654.5" width="1.9" height="1.5" rx="0.5"/></g>
<!-- type -->
<path d="M16.8 673.6 H32.1 V678.6 H30.9 L30.3 675.7 H25.7 V689 L29.1 689.6 V691.4 H19.9 V689.6 L23.2 689 V675.7 H18.6 L18 678.6 H16.8 Z" fill="#dedede"/>
<!-- pen -->
<g transform="translate(14.3,723.4) rotate(-43)">
<path d="M0 0 L9.8 -6 L16.4 -4.4 V4.4 L9.8 6 Z" fill="none" stroke="#dadada" stroke-width="1.25" stroke-linejoin="round"/>
<rect x="17" y="-4.8" width="5.2" height="9.6" fill="#dadada"/>
<path d="M0 0 H10.4" stroke="#dadada" stroke-width="1.1"/><circle cx="11.4" cy="0" r="1.6" fill="#dadada"/>
</g>
<!-- path selection -->
<path d="M22.3 750.6 L25.7 757.5 L27.9 756.4 L24.5 749.6Z" fill="#e2e2e2" stroke="#e2e2e2" stroke-width="0.8" stroke-linejoin="round"/>
<path d="M18.4 738.8 V754.4 L22.4 750.8 L29.6 749.5 Z" fill="#000" stroke="#e2e2e2" stroke-width="1"/>
<!-- ellipse -->
<ellipse cx="22.6" cy="778.8" rx="9.4" ry="7.9" fill="#6c6c6c" stroke="#dedede" stroke-width="1.25"/>
<!-- hand -->
<g fill="#dedede">
<rect x="18.8" y="804.6" width="2.2" height="11" rx="1.1"/><rect x="22.9" y="802.2" width="2.2" height="13" rx="1.1"/><rect x="26.9" y="803.2" width="2.2" height="12" rx="1.1"/>
<path d="M31 808.8 A1.1 1.1 0 0 1 33.2 808.8 C33.2 812 32.8 816 31.4 819 C30 822 27.6 823.2 24.6 823.2 C21.6 823.2 19.6 821.6 18 819.4 L13.2 812.6 C12.8 811.6 14 810.8 14.8 811.6 L18.8 815.6 V813 H31 Z"/>
</g>
<!-- zoom -->
<circle cx="20.4" cy="842" r="6.9" fill="none" stroke="#dedede" stroke-width="1.4"/>
<path d="M25.6 847.2 L32.4 853.5" stroke="#dedede" stroke-width="2.3" stroke-linecap="round"/>
<!-- more -->
<g fill="#dedede"><circle cx="15.3" cy="877.5" r="2.3"/><circle cx="23" cy="877.5" r="2.3"/><circle cx="30.6" cy="877.5" r="2.3"/></g>
<!-- default colors -->
<rect x="8.9" y="905.2" width="7.6" height="7.4" fill="#fff" stroke="#bdbdbd" stroke-width="0.9"/>
<rect x="3.3" y="899.4" width="10.4" height="10.2" fill="#000" stroke="#c8c8c8" stroke-width="0.9"/>
<!-- swap -->
<path d="M31.6 903.6 C35 901.6 38.6 904 38.6 909" fill="none" stroke="#dedede" stroke-width="1.8"/>
<path d="M29.2 904.2 L33.4 900.4 V907.6Z M38.6 913.4 L35 908.8 H42.2Z" fill="#dedede"/>
<!-- bg/fg -->
<rect x="17.6" y="932.2" width="22.8" height="23.2" fill="#fff" stroke="#4a4a4a" stroke-width="1"/>
<rect x="5.8" y="921.1" width="22.3" height="22.2" fill="#3f6428" stroke="#e6e6e6" stroke-width="1.1"/>
<rect x="4.8" y="920.1" width="24.3" height="24.2" fill="none" stroke="#474747" stroke-width="0.9"/>
<!-- quick mask -->
<rect x="12.5" y="971" width="20.2" height="15.4" fill="none" stroke="#d6d6d6" stroke-width="1.3"/>
<circle cx="22.6" cy="978.7" r="5" fill="none" stroke="#e0e0e0" stroke-width="1.2" stroke-dasharray="1.2 1.42"/>
<!-- screen mode -->
<rect x="12.5" y="1008" width="14" height="10.6" fill="#535353" stroke="#d6d6d6" stroke-width="1.3"/>
<rect x="19.4" y="1005.4" width="13.3" height="10" fill="#535353" stroke="#d6d6d6" stroke-width="1.3"/>
<rect x="18.8" y="1004" width="14.5" height="2.2" fill="#d6d6d6"/>
<!-- TASKBAR -->
<g fill="#f4f4f4">
<rect x="296.4" y="959.8" width="6.5" height="2.4" rx="1.2"/><rect x="296.4" y="964.8" width="6.5" height="2.4" rx="1.2"/><rect x="296.4" y="969.8" width="6.5" height="2.4" rx="1.2"/>
<rect x="296.4" y="974.7" width="6.5" height="2.4" rx="1.2"/><rect x="296.4" y="979.7" width="6.5" height="2.4" rx="1.2"/><rect x="296.4" y="984.7" width="6.5" height="2.4" rx="1.2"/>
</g>
<!-- select subject -->
<g fill="#eeeeee"><ellipse cx="335.3" cy="971.7" rx="3.1" ry="3.9"/>
<path d="M333.6 974.6 H337 C337 976.8 337.6 977.2 339.4 977.8 C341.4 978.4 342.2 979.4 342.3 981 H328.5 C328.6 979.4 329.4 978.4 331.4 977.8 C333.2 977.2 333.6 976.8 333.6 974.6Z"/></g>
<path d="M326.6 980.6 C326.6 978 328 976.4 329.6 975 C328.8 969.6 331.4 965.2 335.3 965.2 C339.2 965.2 341.8 969.6 341 975 C342.6 976.4 344.2 978 344.2 980.6" fill="none" stroke="#e6e6e6" stroke-width="1.2" stroke-dasharray="1.1 1.5"/>
<!-- remove background -->
<rect x="470.1" y="966" width="17.8" height="14.1" fill="#f0f0f0"/>
<path d="M471.4 967.3 H486.6 V973.4 L484.6 972 L481 976 L475.6 970.6 L471.4 975.6 Z" fill="#5a5a5a"/>
<g fill="#b8b8b8"><rect x="471.4" y="967.3" width="2.2" height="2"/><rect x="475.8" y="967.3" width="2.2" height="2"/><rect x="480.2" y="967.3" width="2.2" height="2"/><rect x="484.4" y="967.3" width="2.2" height="2"/>
<rect x="473.6" y="969.3" width="2.2" height="2"/><rect x="478" y="969.3" width="2.2" height="2"/><rect x="482.4" y="969.3" width="2.2" height="2"/><rect x="480.2" y="971.3" width="2.2" height="2"/></g>
<!-- adjust colors -->
<circle cx="658.8" cy="970.2" r="3.4" fill="#b4b4b4" stroke="#d8d8d8" stroke-width="0.9"/>
<circle cx="669" cy="970.2" r="3.8" fill="#efefef"/>
<path d="M655.1 978.7 H672.9" stroke="#ececec" stroke-width="1.1"/>
<circle cx="662.4" cy="978.7" r="2" fill="#4f4f4f" stroke="#f0f0f0" stroke-width="1.1"/>
<!-- transform -->
<path d="M793.6 965.4 L803.8 968.6 L807 978.4 L791.4 981.6 Z" fill="none" stroke="#ececec" stroke-width="1.5" stroke-linejoin="round"/>
<g fill="#ececec"><circle cx="793.6" cy="965.4" r="1.8"/><circle cx="803.8" cy="968.6" r="1.8"/><circle cx="807" cy="978.4" r="1.8"/><circle cx="791.4" cy="981.6" r="1.8"/></g>
<!-- invert -->
<circle cx="836.5" cy="973.7" r="6.9" fill="none" stroke="#f4f4f4" stroke-width="1.3"/>
<path d="M841.4 968.8 A6.9 6.9 0 0 1 831.6 978.6 Z" fill="#f4f4f4"/>
<g fill="#f4f4f4"><circle cx="867.2" cy="973.7" r="1.75"/><circle cx="873.9" cy="973.7" r="1.75"/><circle cx="880.6" cy="973.7" r="1.75"/></g>
</svg>
<span class="t" id="m1" style="left:43.00px;top:6.75px;font-size:15px;color:#e8e8e8;letter-spacing:-0.333px;">File</span>
<span class="t" id="m2" style="left:81.00px;top:6.75px;font-size:15px;color:#e8e8e8;letter-spacing:-0.167px;">Edit</span>
<span class="t" id="m3" style="left:121.00px;top:6.75px;font-size:15px;color:#e8e8e8;letter-spacing:0.000px;">Image</span>
<span class="t" id="m4" style="left:177.00px;top:6.75px;font-size:15px;color:#e8e8e8;letter-spacing:-0.650px;">Layer</span>
<span class="t" id="m5" style="left:227.60px;top:6.75px;font-size:15px;color:#e8e8e8;letter-spacing:-0.533px;">Type</span>
<span class="t" id="m6" style="left:273.00px;top:6.75px;font-size:15px;color:#e8e8e8;letter-spacing:-0.400px;">Select</span>
<span class="t" id="m7" style="left:327.20px;top:6.75px;font-size:15px;color:#e8e8e8;letter-spacing:-0.160px;">Filter</span>
<span class="t" id="m8" style="left:375.30px;top:6.75px;font-size:15px;color:#e8e8e8;letter-spacing:-0.767px;">View</span>
<span class="t" id="m9" style="left:421.00px;top:6.75px;font-size:15px;color:#e8e8e8;letter-spacing:-0.167px;">Plugins</span>
<span class="t" id="m10" style="left:484.00px;top:6.75px;font-size:15px;color:#e8e8e8;letter-spacing:0.000px;">Window</span>
<span class="t" id="m11" style="left:553.00px;top:6.75px;font-size:15px;color:#e8e8e8;letter-spacing:0.000px;">Help</span>
<span class="t" id="ps" style="left:11.20px;top:10.10px;font-size:10.3px;color:#31a8ff;letter-spacing:-1.200px;font-weight:bold;">Ps</span>
<span class="t" id="o870" style="left:145.60px;top:63.05px;font-size:12.8px;color:#d8d8d8;letter-spacing:-0.350px;">870</span>
<span class="t" id="omode" style="left:247.20px;top:50.40px;font-size:12.8px;color:#d8d8d8;letter-spacing:-0.075px;">Mode:</span>
<span class="t" id="onormal" style="left:299.50px;top:53.00px;font-size:13px;color:#e6e6e6;letter-spacing:-0.200px;">Normal</span>
<span class="t" id="oopac" style="left:478.50px;top:51.70px;font-size:12.6px;color:#d8d8d8;letter-spacing:-0.143px;">Opacity:</span>
<span class="t" id="o96" style="left:536.20px;top:49.90px;font-size:12.4px;color:#f2f2f2;letter-spacing:0.450px;">96%</span>
<span class="t" id="oflow" style="left:655.00px;top:51.65px;font-size:12.4px;color:#d8d8d8;letter-spacing:0.050px;">Flow:</span>
<span class="t" id="o100" style="left:694.30px;top:50.40px;font-size:12.8px;color:#f2f2f2;letter-spacing:0.300px;">100%</span>
<span class="t" id="osmooth" style="left:813.00px;top:51.90px;font-size:12.4px;color:#d8d8d8;letter-spacing:0.289px;">Smoothing:</span>
<span class="t" id="tabt" style="left:65.30px;top:90.10px;font-size:13.8px;color:#f0f0f0;letter-spacing:0.028px;font-weight:bold;">Untitled-1 @ 21,7% (Layer 2, RGB/8) *</span>
<span class="t" id="szoom" style="left:57.70px;top:1003.40px;font-size:14px;color:#f2f2f2;letter-spacing:0.700px;">21.67%</span>
<span class="t" id="sdoc" style="left:146.00px;top:1004.85px;font-size:12.4px;color:#cfcfcf;letter-spacing:-0.346px;">4961 px x 4961 px (300 ppi)</span>
<span class="t" id="c1" style="left:354.30px;top:967.55px;font-size:14px;color:#f4f4f4;letter-spacing:-0.408px;">Select subject</span>
<span class="t" id="c2" style="left:498.90px;top:968.05px;font-size:14px;color:#f4f4f4;letter-spacing:-0.206px;">Remove background</span>
<span class="t" id="c3" style="left:684.40px;top:968.05px;font-size:14px;color:#f4f4f4;letter-spacing:-0.150px;">Adjust colors</span>
</body>
</html>
